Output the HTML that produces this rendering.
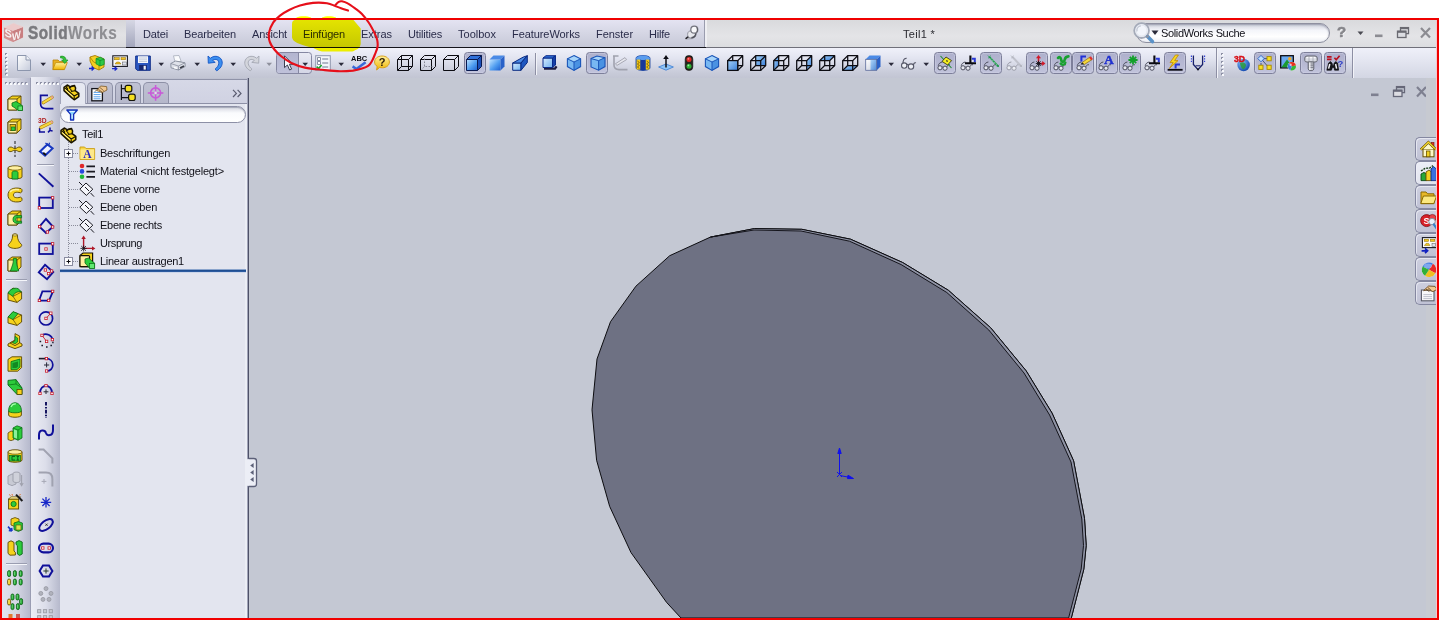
<!DOCTYPE html>
<html lang="de"><head><meta charset="utf-8"><title>SolidWorks - Teil1</title>
<style>
html,body{margin:0;padding:0;background:#fff;}
body{width:1439px;height:620px;position:relative;overflow:hidden;font-family:"Liberation Sans",sans-serif;}
#app div,#app span.t,#app svg{position:absolute;}
#app{position:absolute;left:0;top:0;width:1439px;height:620px;overflow:hidden;}
.t{white-space:nowrap;line-height:1;}
</style></head>
<body><div id="app">
<div style="left:2px;top:20px;width:1435px;height:27px;background:linear-gradient(#d9dadd,#e4e4e7 60%,#dcdde0);"></div>
<div style="left:2px;top:20px;width:124px;height:27px;background:linear-gradient(#d6d6da,#e2e2e5 55%,#dadadd);"></div>
<div style="left:126px;top:20px;width:9px;height:27px;background:linear-gradient(#d6d7e4,#a3a6bc);"></div>
<div style="left:135px;top:20px;width:570px;height:27px;background:linear-gradient(#e4e3f2,#d6d7e5 45%,#c6c8d7);"></div>
<div style="left:704px;top:20px;width:1px;height:27px;background:#9a9cae;"></div>
<div style="left:705px;top:20px;width:2px;height:27px;background:#eeeef2;"></div>
<div style="left:2px;top:47px;width:124px;height:1px;background:#8a8a90;"></div>
<div style="left:126px;top:47px;width:580px;height:1px;background:#15151c;"></div>
<div style="left:706px;top:47px;width:731px;height:1px;background:#70707a;"></div>
<div style="left:2px;top:48px;width:1435px;height:30px;background:linear-gradient(#f0f1fa,#e2e4f0 35%,#c9ccda 80%,#c2c5d3);"></div>
<div style="left:249px;top:78px;width:1188px;height:540px;background:#c4c8d3;"></div>
<div style="left:2px;top:78px;width:29px;height:540px;background:linear-gradient(90deg,#e2e4ee,#d5d7e4 50%,#b4b7cb);"></div>
<div style="left:30px;top:78px;width:1px;height:540px;background:#9a9db3;"></div>
<div style="left:31px;top:77px;width:29px;height:541px;background:linear-gradient(90deg,#ecedf5,#dcdeea 50%,#b6b9cc);"></div>
<div style="left:60px;top:78px;width:187px;height:540px;background:#e3e5ef;"></div>
<div style="left:245px;top:78px;width:2px;height:540px;background:#eceef5;"></div>
<div style="left:247px;top:78px;width:1px;height:540px;background:#a0a3b8;"></div>
<div style="left:248px;top:78px;width:1px;height:540px;background:#4e5168;"></div>
<svg style="left:0px;top:0px;" width="1439" height="620" viewBox="0 0 1439 620">
<polygon points="592.0,409.8 597.0,359.0 610.5,321.7 635.9,286.2 669.7,255.7 710.4,237.1 754.4,228.6 801.8,229.3 850.5,239.2 902.6,262.5 948.4,290.3 990.7,327.8 1026.2,370.9 1052.0,413.0 1073.6,460.8 1084.5,518.4 1086.2,545.5 1083.8,569.2 1071.3,618.0 681.0,618.0 666.5,602.3 631.0,552.6 609.7,506.5 596.6,460.3" fill="#6e7183" stroke="#0c0c10" stroke-width="1"/>
<polygon points="710.4,237.1 754.4,228.6 801.8,229.3 850.5,239.2 902.6,262.5 948.4,290.3 990.7,327.8 1026.2,370.9 1052.0,413.0 1073.6,460.8 1084.5,518.4 1086.2,545.5 1083.8,569.2 1071.3,618.0 1068.6,618.0 1081.2,569.0 1083.5,545.5 1081.8,519.0 1071.0,462.0 1049.6,415.0 1024.0,373.0 988.8,330.0 946.8,292.5 901.2,264.6 849.5,241.2 801.0,231.0 754.0,230.0 710.4,237.1" fill="#9094a6" stroke="none"/>
<polyline points="710.4,237.1 754.4,228.6 801.8,229.3 850.5,239.2 902.6,262.5 948.4,290.3 990.7,327.8 1026.2,370.9 1052.0,413.0 1073.6,460.8 1084.5,518.4 1086.2,545.5 1083.8,569.2 1071.3,618.0" fill="none" stroke="#0c0c10" stroke-width="1"/>
<polyline points="710.4,237.1 754.0,230.0 801.0,231.0 849.5,241.2 901.2,264.6 946.8,292.5 988.8,330.0 1024.0,373.0 1049.6,415.0 1071.0,462.0 1081.8,519.0 1083.5,545.5 1081.2,569.0 1068.6,618.0" fill="none" stroke="#15151c" stroke-width="1"/>
<g stroke="#1010ee" stroke-width="1" fill="#1010ee">
<line x1="839.5" y1="452" x2="839.5" y2="475"/>
<polygon points="839.5,448 837.8,453.5 841.2,453.5"/>
<line x1="837" y1="472" x2="842" y2="477"/><line x1="837" y1="477" x2="842" y2="472"/>
<line x1="840" y1="475.5" x2="850" y2="477.5"/>
<polygon points="853.5,478.5 848,475.2 847.5,478.6"/>
</g>
</svg>
<svg style="left:3px;top:22px;" width="22" height="22" viewBox="0 0 22 22">
<polygon points="0.5,5 10.5,0.8 20.5,4.5 20.5,15.5 10,20.5 0.5,16" fill="#ecd0d0" opacity=".6"/>
<polygon points="1,5.5 10,8.8 10,20 1,16" fill="#d38f90"/>
<polygon points="10,8.8 20,5 20,15.5 10,20" fill="#c97f81"/>
<polygon points="1,5.5 10.5,1.5 20,5 10,8.8" fill="#eccaca"/>
<text x="1.6" y="13.6" font-family="Liberation Sans,sans-serif" font-weight="bold" font-size="11" fill="#f8f0f0" transform="skewY(18)">S</text>
<text x="9.8" y="22.3" font-family="Liberation Sans,sans-serif" font-weight="bold" font-size="10.5" fill="#f8f0f0" transform="skewY(-20) scale(.92,1)" textLength="9.6" lengthAdjust="spacingAndGlyphs">W</text>
</svg>
<span class="t" style="left:28px;top:25px;font-size:17.5px;font-weight:bold;letter-spacing:0.6px;transform-origin:0 0;transform:scaleX(.875);-webkit-text-stroke:0.5px;"><span style="color:#7a7a7e;-webkit-text-stroke-color:#7a7a7e">Solid</span><span style="color:#8e8e92;-webkit-text-stroke:0.15px #8e8e92">Works</span></span>
<span class="t" style="left:143px;top:29px;font-size:11px;color:#2a2c4a;letter-spacing:-0.14px;">Datei</span>
<span class="t" style="left:184px;top:29px;font-size:11px;color:#2a2c4a;letter-spacing:-0.12px;">Bearbeiten</span>
<span class="t" style="left:252px;top:29px;font-size:11px;color:#2a2c4a;letter-spacing:-0.15px;">Ansicht</span>
<span class="t" style="left:303px;top:29px;font-size:11px;color:#2a2c4a;letter-spacing:-0.18px;">Einfügen</span>
<span class="t" style="left:361px;top:29px;font-size:11px;color:#2a2c4a;letter-spacing:-0.03px;">Extras</span>
<span class="t" style="left:408px;top:29px;font-size:11px;color:#2a2c4a;letter-spacing:-0.16px;">Utilities</span>
<span class="t" style="left:458px;top:29px;font-size:11px;color:#2a2c4a;letter-spacing:0.01px;">Toolbox</span>
<span class="t" style="left:512px;top:29px;font-size:11px;color:#2a2c4a;letter-spacing:-0.07px;">FeatureWorks</span>
<span class="t" style="left:596px;top:29px;font-size:11px;color:#2a2c4a;letter-spacing:-0.04px;">Fenster</span>
<span class="t" style="left:649px;top:29px;font-size:11px;color:#2a2c4a;letter-spacing:-0.20px;">Hilfe</span>
<svg style="left:684px;top:24px;" width="16" height="17" viewBox="0 0 16 17"><path d="M5.4,12 L2.2,14.4" stroke="#26262c" stroke-width="1.8" stroke-linecap="round"/><path d="M3,15 L8.6,14.6" stroke="#a4a5b0" stroke-width="1"/>
<ellipse cx="7.8" cy="10.4" rx="4.2" ry="3.7" fill="#e6e7ec" stroke="#8c8d98" stroke-width=".9"/>
<path d="M11.6,8.6 C12.4,11 10.4,13.6 7.4,13.8" fill="none" stroke="#50515c" stroke-width="1.5"/>
<circle cx="10.3" cy="5.7" r="3.5" fill="#f7f7fa" stroke="#73747e" stroke-width="1.2"/><path d="M12.6,3.6 C13.8,5 13.6,7.2 12.2,8.4" fill="none" stroke="#55565f" stroke-width="1"/></svg>
<span class="t" style="left:903px;top:29px;font-size:11px;color:#2a2a30;letter-spacing:0.29px;">Teil1 *</span>
<div style="left:1136px;top:23px;width:194px;height:20px;border-radius:10px;background:linear-gradient(#cfd1dc,#f4f5fa 35%,#ffffff 70%,#eceef4);border:1px solid #8e90a0;box-sizing:border-box;box-shadow:inset 0 1px 2px rgba(80,84,110,.45);"></div>
<span class="t" style="left:1161px;top:28px;font-size:11px;color:#101018;letter-spacing:-0.35px;">SolidWorks Suche</span>
<svg style="left:1132px;top:21px;" width="24" height="24" viewBox="0 0 24 24"><circle cx="9.6" cy="9.6" r="7.4" fill="#f2f5fb" stroke="#a4aab8" stroke-width="1.8"/>
<circle cx="9.6" cy="9.6" r="5.6" fill="none" stroke="#dfe3ec" stroke-width="1"/><path d="M5,10.4 A4.8,4.8 0 0 1 8.8,4.8" fill="none" stroke="#c2c7d4" stroke-width="1.3"/>
<path d="M15.6,15.6 L20.4,20.6" stroke="#5a92c8" stroke-width="3.6" stroke-linecap="round"/>
<path d="M14.6,14.6 L16.4,16.4" stroke="#8e94a2" stroke-width="2.4"/></svg>
<svg style="left:1151px;top:30px;" width="8" height="6" viewBox="0 0 8 6"><polygon points="0.5,0.5 7.5,0.5 4,5" fill="#2a2a3a"/></svg>
<span class="t" style="left:1337px;top:24px;font-size:15px;font-weight:bold;color:#85858a;-webkit-text-stroke:0.6px #85858a;text-shadow:1px 1px 0 #f4f4f6;">?</span>
<svg style="left:1357px;top:31px;" width="7" height="5" viewBox="0 0 7 5"><polygon points="0.5,0.5 6.5,0.5 3.5,4" fill="#4a4a52"/></svg>
<svg style="left:1374px;top:26px;" width="60" height="14" viewBox="0 0 60 14">
<rect x="1" y="8.5" width="7.5" height="2.6" fill="#8c8c92"/>
<g fill="none" stroke="#6a6a72" stroke-width="1.3"><rect x="26.5" y="1.6" width="8" height="6"/><rect x="23.5" y="5.2" width="8.5" height="6.3" fill="#dcdde2"/></g>
<rect x="26.5" y="1.2" width="8" height="2" fill="#6a6a72"/><rect x="23.5" y="4.8" width="8.5" height="2" fill="#6a6a72"/>
<path d="M47,2 L56,11.5 M56,2 L47,11.5" stroke="#8c8c92" stroke-width="2.2"/></svg>
<svg style="left:5px;top:53px;" width="3" height="23" viewBox="0 0 3 23"><rect x="0" y="0" width="2" height="2" fill="#8d90a4"/><rect x="1" y="1" width="2" height="2" fill="#f6f7fb"/><rect x="0" y="4" width="2" height="2" fill="#8d90a4"/><rect x="1" y="5" width="2" height="2" fill="#f6f7fb"/><rect x="0" y="8" width="2" height="2" fill="#8d90a4"/><rect x="1" y="9" width="2" height="2" fill="#f6f7fb"/><rect x="0" y="12" width="2" height="2" fill="#8d90a4"/><rect x="1" y="13" width="2" height="2" fill="#f6f7fb"/><rect x="0" y="16" width="2" height="2" fill="#8d90a4"/><rect x="1" y="17" width="2" height="2" fill="#f6f7fb"/><rect x="0" y="20" width="2" height="2" fill="#8d90a4"/><rect x="1" y="21" width="2" height="2" fill="#f6f7fb"/></svg>
<svg style="left:1221px;top:53px;" width="3" height="23" viewBox="0 0 3 23"><rect x="0" y="0" width="2" height="2" fill="#8d90a4"/><rect x="1" y="1" width="2" height="2" fill="#f6f7fb"/><rect x="0" y="4" width="2" height="2" fill="#8d90a4"/><rect x="1" y="5" width="2" height="2" fill="#f6f7fb"/><rect x="0" y="8" width="2" height="2" fill="#8d90a4"/><rect x="1" y="9" width="2" height="2" fill="#f6f7fb"/><rect x="0" y="12" width="2" height="2" fill="#8d90a4"/><rect x="1" y="13" width="2" height="2" fill="#f6f7fb"/><rect x="0" y="16" width="2" height="2" fill="#8d90a4"/><rect x="1" y="17" width="2" height="2" fill="#f6f7fb"/><rect x="0" y="20" width="2" height="2" fill="#8d90a4"/><rect x="1" y="21" width="2" height="2" fill="#f6f7fb"/></svg>
<div style="left:535px;top:53px;width:1px;height:22px;background:#8d8fa4;"></div>
<div style="left:536px;top:53px;width:1px;height:22px;background:#f2f3f8;"></div>
<div style="left:1216px;top:48px;width:1px;height:30px;background:#8d8fa4;"></div>
<div style="left:1217px;top:48px;width:1px;height:30px;background:#f2f3f8;"></div>
<div style="left:1352px;top:48px;width:1px;height:30px;background:#8d8fa4;"></div>
<div style="left:1353px;top:48px;width:1px;height:30px;background:#f2f3f8;"></div>
<div style="left:1354px;top:48px;width:83px;height:30px;background:linear-gradient(#eff0f9,#e4e6f1 40%,#d3d6e3);"></div>
<svg width="0" height="0" style="left:0;top:0"><defs>
<linearGradient id="gb" x1="0" y1="0" x2="1" y2="1"><stop offset="0" stop-color="#bfe3ff"/><stop offset=".55" stop-color="#4f9df0"/><stop offset="1" stop-color="#1d5fd0"/></linearGradient>
<linearGradient id="gb2" x1="0" y1="0" x2="1" y2="1"><stop offset="0" stop-color="#a4d2fa"/><stop offset="1" stop-color="#3a7ed6"/></linearGradient>
<linearGradient id="gbl" x1="0" y1="0" x2="1" y2="1"><stop offset="0" stop-color="#d6ecff"/><stop offset="1" stop-color="#6fb0ee"/></linearGradient>
<linearGradient id="gy" x1="0" y1="0" x2="0" y2="1"><stop offset="0" stop-color="#fff2a0"/><stop offset="1" stop-color="#f0b400"/></linearGradient>
<linearGradient id="gpg" x1="0" y1="0" x2="1" y2="1"><stop offset="0" stop-color="#ffffff"/><stop offset="1" stop-color="#c5cbdb"/></linearGradient>
<radialGradient id="gglobe" cx=".35" cy=".3" r=".8"><stop offset="0" stop-color="#7fc0ff"/><stop offset="1" stop-color="#0b3fa8"/></radialGradient>
</defs></svg>
<svg style="left:16px;top:55px;overflow:visible;" width="16" height="16" viewBox="0 0 16 16"><path d="M1.5,0.5 H10 L14.5,5 V15.5 H1.5 Z" fill="url(#gpg)" stroke="#8c96ad" stroke-width="1"/><path d="M10,0.5 V5 H14.5" fill="#eef1f7" stroke="#8c96ad" stroke-width="1"/></svg>
<svg style="left:40px;top:62px;" width="7" height="5" viewBox="0 0 7 5"><polygon points="0.4,0.8 6,0.8 3.2,4" fill="#2b2b3b"/></svg>
<svg style="left:52px;top:55px;overflow:visible;" width="16" height="16" viewBox="0 0 16 16"><path d="M1,5 H6 L7.5,6.5 H12 V14.5 H1 Z" fill="#e9b020" stroke="#b98408" stroke-width=".8"/>
<path d="M0.8,14.6 L3.6,7.6 H15.3 L12.4,14.6 Z" fill="url(#gy)" stroke="#c08a08" stroke-width=".8"/>
<path d="M8.5,1.2 C12,0.6 14,2.4 14,5 L16,5 L12.8,8.6 L9.6,5 L11.6,5 C11.6,3.6 10.6,2.8 8.5,3 Z" fill="#35c33a" stroke="#138a1c" stroke-width=".6"/></svg>
<svg style="left:76px;top:62px;" width="7" height="5" viewBox="0 0 7 5"><polygon points="0.4,0.8 6,0.8 3.2,4" fill="#2b2b3b"/></svg>
<svg style="left:89px;top:55px;overflow:visible;" width="16" height="16" viewBox="0 0 16 16"><path d="M1,2 L6,0.5 L15,4 L15,12 L10,15 L4,12.5 L1,6 Z" fill="#f5cf22" stroke="#a87c00" stroke-width=".9"/>
<path d="M1,2 L4.5,7 L10,9 L10,15" fill="none" stroke="#a87c00" stroke-width=".8"/>
<path d="M7,3.5 L11.5,2.2 L15.2,4.2 L15.2,9.5 L11,11 L7,8.8 Z" fill="#2fc848" stroke="#0d8a22" stroke-width=".7"/><path d="M7,3.5 L11,5.6 L15.2,4.2 M11,5.6 L11,11" fill="none" stroke="#0d8a22" stroke-width=".7"/>
<path d="M0,13.5 H4.2 M2.6,11.5 L4.8,13.5 L2.6,15.5" fill="none" stroke="#1828c8" stroke-width="1.3"/></svg>
<svg style="left:112px;top:55px;overflow:visible;" width="16" height="16" viewBox="0 0 16 16"><rect x="0.8" y="0.8" width="14.6" height="10.6" fill="#fbfbfd" stroke="#1a1a22" stroke-width="1.1"/>
<rect x="2.6" y="2.6" width="4.6" height="2.2" fill="#f0c020" stroke="#8a6a00" stroke-width=".5"/><rect x="9" y="2.6" width="4.6" height="2.2" fill="#f0c020" stroke="#8a6a00" stroke-width=".5"/>
<path d="M3,9 L4.6,7 H7.4 L9,9 Z" fill="#f0c020" stroke="#8a6a00" stroke-width=".5"/><rect x="10.5" y="7" width="4" height="3" fill="#dfe3ee" stroke="#555" stroke-width=".5"/>
<path d="M0,13.7 H4.2 M2.6,11.8 L4.8,13.7 L2.6,15.6" fill="none" stroke="#1828c8" stroke-width="1.3"/></svg>
<svg style="left:135px;top:55px;overflow:visible;" width="16" height="16" viewBox="0 0 16 16"><path d="M0.7,1 H15.3 V15.3 H2.2 L0.7,13.8 Z" fill="#2a56c0" stroke="#12308a" stroke-width="1"/>
<rect x="3" y="1.2" width="10" height="6.8" fill="#f4f6fb"/><path d="M4,3 H12 M4,4.8 H12 M4,6.5 H12" stroke="#b8c0d4" stroke-width=".8"/>
<rect x="4.2" y="10" width="7.6" height="5.2" fill="#16266e"/><rect x="8.6" y="10.8" width="2.2" height="3.8" fill="#eef1f8"/></svg>
<svg style="left:158px;top:62px;" width="7" height="5" viewBox="0 0 7 5"><polygon points="0.4,0.8 6,0.8 3.2,4" fill="#2b2b3b"/></svg>
<svg style="left:170px;top:55px;overflow:visible;" width="16" height="16" viewBox="0 0 16 16"><path d="M3.5,0.8 L9,0.5 L11.2,6.5 L5,7 Z" fill="#fafbfd" stroke="#a7adbb" stroke-width=".8"/>
<path d="M0.8,8.5 L5.5,6 L15,7.8 L15.2,11.5 L8.5,15 L1,12.8 Z" fill="#dfe2ea" stroke="#868c9b" stroke-width=".9"/>
<path d="M0.8,8.5 L8.3,11 L15,7.8 M8.3,11 L8.5,15" fill="none" stroke="#868c9b" stroke-width=".8"/>
<path d="M4,12.5 L7,13.4" stroke="#fff" stroke-width="1.4"/><path d="M10,13 L14,11" stroke="#3a3d48" stroke-width="1.6"/></svg>
<svg style="left:194px;top:62px;" width="7" height="5" viewBox="0 0 7 5"><polygon points="0.4,0.8 6,0.8 3.2,4" fill="#2b2b3b"/></svg>
<svg style="left:207px;top:55px;overflow:visible;" width="16" height="16" viewBox="0 0 16 16"><path d="M1,1 L1.3,8.2 L8.2,7.4 L5.6,5.4 C8.4,3.4 12.2,4.6 11.8,8.2 C11.6,10.8 9.8,12.8 8,14.2 L9.8,15.8 C13.2,13.6 15.6,10.6 15.2,7 C14.6,1.6 8,-0.6 3.4,3.2 Z" fill="#3b8ef0" stroke="#1556c4" stroke-width=".9" stroke-linejoin="round"/></svg>
<svg style="left:230px;top:62px;" width="7" height="5" viewBox="0 0 7 5"><polygon points="0.4,0.8 6,0.8 3.2,4" fill="#2b2b3b"/></svg>
<svg style="left:244px;top:55px;overflow:visible;" width="16" height="16" viewBox="0 0 16 16"><path d="M15,1 L14.7,8.2 L7.8,7.4 L10.4,5.4 C7.6,3.4 3.8,4.6 4.2,8.2 C4.4,10.8 6.2,12.8 8,14.2 L6.2,15.8 C2.8,13.6 0.4,10.6 0.8,7 C1.4,1.6 8,-0.6 12.6,3.2 Z" fill="#d3d5dc" stroke="#a4a7b2" stroke-width=".9" stroke-linejoin="round"/></svg>
<svg style="left:266px;top:62px;" width="7" height="5" viewBox="0 0 7 5"><polygon points="0.4,0.8 6,0.8 3.2,4" fill="#8e909c"/></svg>
<div style="left:276px;top:52px;width:36px;height:22px;box-sizing:border-box;border:1px solid #8587a2;border-radius:3.5px;background:linear-gradient(#e9eaf4,#d4d6e6);"></div>
<div style="left:277px;top:53px;width:21px;height:20px;background:linear-gradient(#b3b5d0,#bfc1da);border-radius:2.5px 0 0 2.5px;"></div>
<div style="left:298px;top:53px;width:1px;height:20px;background:#8587a2;"></div>
<svg style="left:280px;top:55px;overflow:visible;" width="16" height="16" viewBox="0 0 16 16"><path d="M4.5,0.8 L4.5,12.6 L7.4,10 L9.6,15 L11.6,14.1 L9.4,9.3 L13,9.3 Z" fill="#f7f8fc" stroke="#3c3e50" stroke-width="1" stroke-linejoin="round"/></svg>
<svg style="left:302px;top:62px;" width="7" height="5" viewBox="0 0 7 5"><polygon points="0.4,0.8 6,0.8 3.2,4" fill="#2b2b3b"/></svg>
<svg style="left:315px;top:55px;overflow:visible;" width="16" height="16" viewBox="0 0 16 16"><rect x="0.7" y="0.7" width="14.6" height="14.6" fill="#f3f5fa" stroke="#8f97ad" stroke-width="1"/>
<rect x="2.6" y="2.6" width="2.8" height="2.8" fill="#fff" stroke="#6f7890" stroke-width=".8"/><rect x="2.6" y="6.6" width="2.8" height="2.8" fill="#fff" stroke="#6f7890" stroke-width=".8"/>
<path d="M7.2,4 H13.2 M7.2,8 H13.2 M7.2,12 H13.2" stroke="#6f7890" stroke-width="1"/>
<path d="M1.6,11.6 L3.6,13.6 L6.6,10" fill="none" stroke="#18a028" stroke-width="1.6"/></svg>
<svg style="left:338px;top:62px;" width="7" height="5" viewBox="0 0 7 5"><polygon points="0.4,0.8 6,0.8 3.2,4" fill="#2b2b3b"/></svg>
<svg style="left:351px;top:55px;overflow:visible;" width="16" height="16" viewBox="0 0 16 16"><text x="0" y="5.9" font-family="Liberation Sans,sans-serif" font-weight="bold" font-size="8" fill="#0e0e14" textLength="16.2" lengthAdjust="spacingAndGlyphs">ABC</text>
<path d="M1.6,11.4 L5.4,14 L14.6,7.2" fill="none" stroke="#3a68d8" stroke-width="2.5" stroke-linejoin="miter"/></svg>
<svg style="left:374px;top:55px;overflow:visible;" width="16" height="16" viewBox="0 0 16 16"><path d="M8,1 C12.4,1 15.4,3.6 15.4,7 C15.4,10.4 12.2,12.8 8.4,12.8 C7.2,12.8 6.4,12.7 5.6,12.4 L2.6,15 L3.2,11.4 C1.4,10.4 0.6,8.8 0.6,7 C0.6,3.6 3.6,1 8,1 Z" fill="url(#gy)" stroke="#d59a10" stroke-width=".9"/>
<text x="8" y="11" text-anchor="middle" font-family="Liberation Sans,sans-serif" font-weight="bold" font-size="11" fill="#2a1c08">?</text></svg>
<svg style="left:397px;top:55px;overflow:visible;" width="16" height="16" viewBox="0 0 16 16"><g fill="none" stroke="#0c0c12" stroke-width="1" stroke-linejoin="round"><rect x="0.5" y="4.5" width="11" height="11"/><path d="M0.5,4.5 L4.5,0.5 H15.5 V11.5 L11.5,15.5 M11.5,4.5 L15.5,0.5"/><path d="M4.5,0.5 V11.5 H15.5 M4.5,11.5 L0.5,15.5"/></g></svg>
<svg style="left:420px;top:55px;overflow:visible;" width="16" height="16" viewBox="0 0 16 16"><g fill="none" stroke="#0c0c12" stroke-width="1" stroke-linejoin="round"><rect x="0.5" y="4.5" width="11" height="11"/><path d="M0.5,4.5 L4.5,0.5 H15.5 V11.5 L11.5,15.5 M11.5,4.5 L15.5,0.5"/><path d="M4.5,3.5 V11.5 H12.5 M4.5,11.5 L1.7,14.5" stroke="#7a7d8a" stroke-width=".9" stroke-dasharray="1.6,1.4"/></g></svg>
<svg style="left:443px;top:55px;overflow:visible;" width="16" height="16" viewBox="0 0 16 16"><g fill="none" stroke="#0c0c12" stroke-width="1" stroke-linejoin="round"><rect x="0.5" y="4.5" width="11" height="11"/><path d="M0.5,4.5 L4.5,0.5 H15.5 V11.5 L11.5,15.5 M11.5,4.5 L15.5,0.5"/></g></svg>
<div style="left:464px;top:52px;width:22px;height:22px;box-sizing:border-box;border:1px solid #7d7f9a;border-radius:3.5px;background:linear-gradient(#aeb0cc,#b8bad4 60%,#c2c4dc);box-shadow:inset 0 0 0 1px rgba(206,208,228,.5);"></div>
<svg style="left:466px;top:55px;overflow:visible;" width="16" height="16" viewBox="0 0 16 16"><polygon points="0.5,4.5 11.5,4.5 11.5,15.5 0.5,15.5" fill="url(#gb)"/><polygon points="0.5,4.5 4.5,0.5 15.5,0.5 11.5,4.5" fill="#2f6fd8"/><polygon points="11.5,4.5 15.5,0.5 15.5,11.5 11.5,15.5" fill="#1a4fb8"/><g fill="none" stroke="#0a1a50" stroke-width="1" stroke-linejoin="round"><rect x="0.5" y="4.5" width="11" height="11"/><path d="M0.5,4.5 L4.5,0.5 H15.5 V11.5 L11.5,15.5 M11.5,4.5 L15.5,0.5"/></g></svg>
<svg style="left:489px;top:55px;overflow:visible;" width="16" height="16" viewBox="0 0 16 16"><polygon points="0.5,4.5 11.5,4.5 11.5,15.5 0.5,15.5" fill="url(#gb)"/><polygon points="0.5,4.5 4.5,0.5 15.5,0.5 11.5,4.5" fill="#4a8ae6"/><polygon points="11.5,4.5 15.5,0.5 15.5,11.5 11.5,15.5" fill="#2a62c8"/></svg>
<svg style="left:512px;top:55px;overflow:visible;" width="16" height="16" viewBox="0 0 16 16"><polygon points="0.7,8 9,8 9,15.3 0.7,15.3" fill="url(#gbl)" stroke="#0a2a80" stroke-width="1"/>
<polygon points="0.7,8 9,8 15.3,0.7 11,2.2" fill="#4a8ae6" stroke="#0a2a80" stroke-width="1"/>
<polygon points="9,8 15.3,0.7 15.3,7.5 9,15.3" fill="#1f57c0" stroke="#0a2a80" stroke-width="1"/></svg>
<svg style="left:542px;top:55px;overflow:visible;" width="16" height="16" viewBox="0 0 16 16"><path d="M2,13.6 L13,13.6 L14.6,11.4" stroke="#1a1a40" stroke-width="2.2" fill="none"/>
<polygon points="1,3 10.5,3 10.5,12.5 1,12.5" fill="url(#gbl)" stroke="#0a2a8a" stroke-width="1"/>
<polygon points="1,3 4,0.7 13.5,0.7 10.5,3" fill="#2f6fd8" stroke="#0a2a8a" stroke-width="1"/>
<polygon points="10.5,3 13.5,0.7 13.5,10 10.5,12.5" fill="#143fa8" stroke="#0a2a8a" stroke-width="1"/></svg>
<svg style="left:566px;top:55px;overflow:visible;" width="16" height="16" viewBox="0 0 16 16"><polygon points="8,0.6 14.6,3.8 14.6,11.6 8,15.4 1.4,11.6 1.4,3.8" fill="#78b8f2"/>
<polygon points="8,7 14.6,3.8 14.6,11.6 8,15.4" fill="#4a92e2"/><polygon points="8,0.6 14.6,3.8 8,7 1.4,3.8" fill="#a6d4fa"/>
<path d="M1.4,3.8 L8,7 L14.6,3.8 M8,7 V15.4" fill="none" stroke="#1a55b8" stroke-width="1"/>
<polygon points="8,0.6 14.6,3.8 14.6,11.6 8,15.4 1.4,11.6 1.4,3.8" fill="none" stroke="#1a55b8" stroke-width="1.1"/></svg>
<div style="left:586px;top:52px;width:22px;height:22px;box-sizing:border-box;border:1px solid #7d7f9a;border-radius:3.5px;background:linear-gradient(#aeb0cc,#b8bad4 60%,#c2c4dc);box-shadow:inset 0 0 0 1px rgba(206,208,228,.5);"></div>
<svg style="left:590px;top:55px;overflow:visible;" width="16" height="16" viewBox="0 0 16 16"><polygon points="1,3.6 7,1 15,2.6 15,11.6 8.6,15.2 1,12" fill="#78b8f2"/>
<polygon points="8.6,5.6 15,2.6 15,11.6 8.6,15.2" fill="#4a92e2"/><polygon points="1,3.6 7,1 15,2.6 8.6,5.6" fill="#a6d4fa"/>
<path d="M1,3.6 L8.6,5.6 L15,2.6 M8.6,5.6 V15.2" fill="none" stroke="#1a55b8" stroke-width="1"/>
<polygon points="1,3.6 7,1 15,2.6 15,11.6 8.6,15.2 1,12" fill="none" stroke="#1a55b8" stroke-width="1.1"/></svg>
<svg style="left:612px;top:55px;overflow:visible;" width="16" height="16" viewBox="0 0 16 16"><path d="M1,1 H6.5 M2,1 V10 C2,13 4,14.6 7,14.6 H15.5" fill="none" stroke="#a0a2ae" stroke-width="1.6"/>
<path d="M3.4,8.8 L13,2.6 L14.6,4.6 L5,10.4 Z" fill="#e6e7ee" stroke="#a0a2ae" stroke-width=".9"/></svg>
<svg style="left:635px;top:55px;overflow:visible;" width="16" height="16" viewBox="0 0 16 16"><path d="M1,3.4 C1,1.6 4,0.6 8,0.6 C12,0.6 15,1.6 15,3.4 V12.6 C15,14.4 12,15.4 8,15.4 C4,15.4 1,14.4 1,12.6 Z" fill="#2a62c8" stroke="#123a98" stroke-width=".8"/>
<ellipse cx="8" cy="3.4" rx="7" ry="2.8" fill="#5a9cee"/>
<path d="M5.2,4.5 V15 C6.5,15.4 9.5,15.4 10.8,15 V4.5 C9.5,5.2 6.5,5.2 5.2,4.5 Z" fill="#16389a"/>
<rect x="1.6" y="4.6" width="3.6" height="10" fill="#f2c818"/><rect x="10.8" y="4.6" width="3.6" height="10" fill="#f2c818"/>
<path d="M2.4,6 L4.4,7.5 L2.4,9 L4.4,10.5 L2.4,12 L4.4,13.5 M11.6,6 L13.6,7.5 L11.6,9 L13.6,10.5 L11.6,12 L13.6,13.5" fill="none" stroke="#7a5a00" stroke-width=".8"/></svg>
<svg style="left:658px;top:55px;overflow:visible;" width="16" height="16" viewBox="0 0 16 16"><polygon points="0.6,12 8,9 15.4,12 8,15.2" fill="#8ec4f6" stroke="#3a7ad0" stroke-width=".8"/>
<path d="M8,12.4 V2" stroke="#0c0c14" stroke-width="1.5"/><polygon points="8,0 5.2,4 10.8,4" fill="#0c0c14"/></svg>
<svg style="left:681px;top:55px;overflow:visible;" width="16" height="16" viewBox="0 0 16 16"><rect x="4.2" y="0.6" width="7.6" height="14.8" rx="3.4" fill="#26241e" stroke="#0a0a08" stroke-width=".6"/>
<circle cx="8" cy="4.6" r="2.5" fill="#e02824"/><circle cx="7.4" cy="3.8" r=".9" fill="#ff8a8a"/>
<circle cx="8" cy="11.2" r="2.5" fill="#2cb034"/><circle cx="7.4" cy="10.4" r=".9" fill="#9af0a0"/></svg>
<svg style="left:704px;top:55px;overflow:visible;" width="16" height="16" viewBox="0 0 16 16"><polygon points="8,0.6 14.6,3.8 14.6,11.6 8,15.4 1.4,11.6 1.4,3.8" fill="#78b8f2"/>
<polygon points="8,7 14.6,3.8 14.6,11.6 8,15.4" fill="#4a92e2"/><polygon points="8,0.6 14.6,3.8 8,7 1.4,3.8" fill="#a6d4fa"/>
<path d="M1.4,3.8 L8,7 L14.6,3.8 M8,7 V15.4" fill="none" stroke="#1a55b8" stroke-width="1"/>
<polygon points="8,0.6 14.6,3.8 14.6,11.6 8,15.4 1.4,11.6 1.4,3.8" fill="none" stroke="#1a55b8" stroke-width="1.1"/></svg>
<svg style="left:727px;top:55px;overflow:visible;" width="16" height="16" viewBox="0 0 16 16"><g fill="none" stroke="#0c0c12" stroke-width="1.25" stroke-linejoin="round"><rect x="0.7" y="5.6" width="10" height="9.8"/><path d="M0.7,5.6 L5.7,0.7 H15.7 V10.5 L10.7,15.4 M10.7,5.6 L15.7,0.7"/><path d="M5.7,0.7 V10.5 H15.7 M5.7,10.5 L0.7,15.4"/></g><polygon points="0.7,5.6 10.7,5.6 10.7,15.4 0.7,15.4" fill="url(#gb2)"/><rect x="0.7" y="5.6" width="10" height="9.8" fill="none" stroke="#0c0c12" stroke-width="1.25"/></svg>
<svg style="left:750px;top:55px;overflow:visible;" width="16" height="16" viewBox="0 0 16 16"><polygon points="5.7,0.7 15.7,0.7 15.7,10.5 5.7,10.5" fill="url(#gb2)"/><g fill="none" stroke="#0c0c12" stroke-width="1.25" stroke-linejoin="round"><rect x="0.7" y="5.6" width="10" height="9.8"/><path d="M0.7,5.6 L5.7,0.7 H15.7 V10.5 L10.7,15.4 M10.7,5.6 L15.7,0.7"/><path d="M5.7,0.7 V10.5 H15.7 M5.7,10.5 L0.7,15.4"/></g></svg>
<svg style="left:773px;top:55px;overflow:visible;" width="16" height="16" viewBox="0 0 16 16"><polygon points="0.7,5.6 5.7,0.7 5.7,10.5 0.7,15.4" fill="url(#gb2)"/><g fill="none" stroke="#0c0c12" stroke-width="1.25" stroke-linejoin="round"><rect x="0.7" y="5.6" width="10" height="9.8"/><path d="M0.7,5.6 L5.7,0.7 H15.7 V10.5 L10.7,15.4 M10.7,5.6 L15.7,0.7"/><path d="M5.7,0.7 V10.5 H15.7 M5.7,10.5 L0.7,15.4"/></g></svg>
<svg style="left:796px;top:55px;overflow:visible;" width="16" height="16" viewBox="0 0 16 16"><polygon points="10.7,5.6 15.7,0.7 15.7,10.5 10.7,15.4" fill="url(#gb2)"/><g fill="none" stroke="#0c0c12" stroke-width="1.25" stroke-linejoin="round"><rect x="0.7" y="5.6" width="10" height="9.8"/><path d="M0.7,5.6 L5.7,0.7 H15.7 V10.5 L10.7,15.4 M10.7,5.6 L15.7,0.7"/><path d="M5.7,0.7 V10.5 H15.7 M5.7,10.5 L0.7,15.4"/></g></svg>
<svg style="left:819px;top:55px;overflow:visible;" width="16" height="16" viewBox="0 0 16 16"><polygon points="0.7,5.6 5.7,0.7 15.7,0.7 10.7,5.6" fill="url(#gb2)"/><g fill="none" stroke="#0c0c12" stroke-width="1.25" stroke-linejoin="round"><rect x="0.7" y="5.6" width="10" height="9.8"/><path d="M0.7,5.6 L5.7,0.7 H15.7 V10.5 L10.7,15.4 M10.7,5.6 L15.7,0.7"/><path d="M5.7,0.7 V10.5 H15.7 M5.7,10.5 L0.7,15.4"/></g></svg>
<svg style="left:842px;top:55px;overflow:visible;" width="16" height="16" viewBox="0 0 16 16"><polygon points="0.7,15.4 5.7,10.5 15.7,10.5 10.7,15.4" fill="url(#gb2)"/><g fill="none" stroke="#0c0c12" stroke-width="1.25" stroke-linejoin="round"><rect x="0.7" y="5.6" width="10" height="9.8"/><path d="M0.7,5.6 L5.7,0.7 H15.7 V10.5 L10.7,15.4 M10.7,5.6 L15.7,0.7"/><path d="M5.7,0.7 V10.5 H15.7 M5.7,10.5 L0.7,15.4"/></g></svg>
<svg style="left:865px;top:55px;overflow:visible;" width="16" height="16" viewBox="0 0 16 16"><polygon points="0.5,4.5 11.5,4.5 11.5,15.5 0.5,15.5" fill="url(#gpg)"/><polygon points="0.5,4.5 4.5,0.5 15.5,0.5 11.5,4.5" fill="#4a8ae6"/><polygon points="11.5,4.5 15.5,0.5 15.5,11.5 11.5,15.5" fill="#2a62c8"/><polygon points="5.5,4.3 11.7,4.3 11.7,15.3 5.5,15.3" fill="url(#gb2)" opacity=".85"/><rect x="0.7" y="4.3" width="11" height="11" fill="none" stroke="#5a6a9a" stroke-width=".8"/></svg>
<svg style="left:888px;top:62px;" width="7" height="5" viewBox="0 0 7 5"><polygon points="0.4,0.8 6,0.8 3.2,4" fill="#2b2b3b"/></svg>
<svg style="left:900px;top:55px;overflow:visible;" width="16" height="16" viewBox="0 0 16 16"><g fill="none" stroke="#565868" stroke-width="1.1"><path d="M3.4,9 C2.4,5.6 4.2,3 6.6,3.4"/>
<circle cx="4.2" cy="10.6" r="2.7" fill="#eef0f6"/><circle cx="11" cy="11.6" r="2.7" fill="#eef0f6"/>
<path d="M6.8,9.8 C7.6,9 8.2,9.4 8.6,10.2"/><path d="M13.4,10.2 C13.8,8 14.8,7.4 16,7.8"/></g></svg>
<svg style="left:923px;top:62px;" width="7" height="5" viewBox="0 0 7 5"><polygon points="0.4,0.8 6,0.8 3.2,4" fill="#2b2b3b"/></svg>
<div style="left:934px;top:52px;width:22px;height:22px;box-sizing:border-box;border:1px solid #7d7f9a;border-radius:3.5px;background:linear-gradient(#aeb0cc,#b8bad4 60%,#c2c4dc);box-shadow:inset 0 0 0 1px rgba(206,208,228,.5);"></div>
<svg style="left:937px;top:55px;overflow:visible;" width="16" height="16" viewBox="0 0 16 16"><g transform="translate(0,0)" fill="#e6e8f0" stroke="#4e5060" stroke-width="1">
<path d="M1.2,10.8 C1.6,8.6 3.4,7.2 5.4,7" fill="none"/>
<circle cx="3" cy="12.8" r="2.1"/><circle cx="8" cy="13.2" r="2.1"/>
<path d="M4.9,12.2 C5.4,11.7 5.8,11.8 6.1,12.3" fill="none"/>
<path d="M9.8,11.8 C10.6,10 11.8,9.4 13,9.8" fill="none"/></g><path d="M3.5,1 L14.5,13" stroke="#1a8a30" stroke-width="1.1"/>
<polygon points="9,2 14.6,5.6 10.6,10 5,6.4" fill="#f4ee20" stroke="#2a2a10" stroke-width=".8"/><path d="M9.8,5 L10.2,7" stroke="#222" stroke-width="1"/></svg>
<svg style="left:960px;top:55px;overflow:visible;" width="16" height="16" viewBox="0 0 16 16"><g transform="translate(0,0)" fill="#e6e8f0" stroke="#4e5060" stroke-width="1">
<path d="M1.2,10.8 C1.6,8.6 3.4,7.2 5.4,7" fill="none"/>
<circle cx="3" cy="12.8" r="2.1"/><circle cx="8" cy="13.2" r="2.1"/>
<path d="M4.9,12.2 C5.4,11.7 5.8,11.8 6.1,12.3" fill="none"/>
<path d="M9.8,11.8 C10.6,10 11.8,9.4 13,9.8" fill="none"/></g><path d="M10.4,0.4 V8.6 M5,8.2 H16" stroke="#0a0a10" stroke-width="2.1" fill="none"/><path d="M11.8,3.8 H14.8 V7" stroke="#2a3ad8" stroke-width="2" fill="none"/></svg>
<div style="left:980px;top:52px;width:22px;height:22px;box-sizing:border-box;border:1px solid #7d7f9a;border-radius:3.5px;background:linear-gradient(#aeb0cc,#b8bad4 60%,#c2c4dc);box-shadow:inset 0 0 0 1px rgba(206,208,228,.5);"></div>
<svg style="left:983px;top:55px;overflow:visible;" width="16" height="16" viewBox="0 0 16 16"><g transform="translate(0,0)" fill="#e6e8f0" stroke="#4e5060" stroke-width="1">
<path d="M1.2,10.8 C1.6,8.6 3.4,7.2 5.4,7" fill="none"/>
<circle cx="3" cy="12.8" r="2.1"/><circle cx="8" cy="13.2" r="2.1"/>
<path d="M4.9,12.2 C5.4,11.7 5.8,11.8 6.1,12.3" fill="none"/>
<path d="M9.8,11.8 C10.6,10 11.8,9.4 13,9.8" fill="none"/></g><path d="M6.5,2 L15,11" stroke="#1a9a48" stroke-width="1.7"/><path d="M5,0.6 L7.8,3.4 M7.6,0.8 L5.2,3.2 M13.6,9.6 L16,12 M16,9.8 L13.8,12" stroke="#1a9a48" stroke-width=".9"/>
<path d="M8,3.4 L14,10" stroke="#d8f0e0" stroke-width=".7" stroke-dasharray="1.2,1.2"/></svg>
<svg style="left:1006px;top:55px;overflow:visible;" width="16" height="16" viewBox="0 0 16 16"><g transform="translate(0,0)" fill="#eceef4" stroke="#9a9ca8" stroke-width="1">
<path d="M1.2,10.8 C1.6,8.6 3.4,7.2 5.4,7" fill="none"/>
<circle cx="3" cy="12.8" r="2.1"/><circle cx="8" cy="13.2" r="2.1"/>
<path d="M4.9,12.2 C5.4,11.7 5.8,11.8 6.1,12.3" fill="none"/>
<path d="M9.8,11.8 C10.6,10 11.8,9.4 13,9.8" fill="none"/></g><path d="M6.5,2 L15,11" stroke="#c0c2cc" stroke-width="2"/><path d="M5,0.6 L7.8,3.4 M7.6,0.8 L5.2,3.2 M13.6,9.6 L16,12 M16,9.8 L13.8,12" stroke="#b0b2bc" stroke-width=".9"/></svg>
<div style="left:1026px;top:52px;width:22px;height:22px;box-sizing:border-box;border:1px solid #7d7f9a;border-radius:3.5px;background:linear-gradient(#aeb0cc,#b8bad4 60%,#c2c4dc);box-shadow:inset 0 0 0 1px rgba(206,208,228,.5);"></div>
<svg style="left:1029px;top:55px;overflow:visible;" width="16" height="16" viewBox="0 0 16 16"><g transform="translate(0,0)" fill="#e6e8f0" stroke="#4e5060" stroke-width="1">
<path d="M1.2,10.8 C1.6,8.6 3.4,7.2 5.4,7" fill="none"/>
<circle cx="3" cy="12.8" r="2.1"/><circle cx="8" cy="13.2" r="2.1"/>
<path d="M4.9,12.2 C5.4,11.7 5.8,11.8 6.1,12.3" fill="none"/>
<path d="M9.8,11.8 C10.6,10 11.8,9.4 13,9.8" fill="none"/></g><path d="M9.5,8.5 V2.4 M9.5,8.5 H14" stroke="#d01828" stroke-width="1.5"/><polygon points="9.5,0 7,3.2 12,3.2" fill="#d01828"/><polygon points="16.4,8.5 13.2,6 13.2,11" fill="#d01828"/>
<path d="M7.4,6.4 L11.6,10.6 M11.6,6.4 L7.4,10.6 M9.5,5.8 V11.2 M6.8,8.5 H12.2" stroke="#14141c" stroke-width=".9"/></svg>
<div style="left:1050px;top:52px;width:22px;height:22px;box-sizing:border-box;border:1px solid #7d7f9a;border-radius:3.5px;background:linear-gradient(#aeb0cc,#b8bad4 60%,#c2c4dc);box-shadow:inset 0 0 0 1px rgba(206,208,228,.5);"></div>
<svg style="left:1053px;top:55px;overflow:visible;" width="16" height="16" viewBox="0 0 16 16"><g transform="translate(0,0)" fill="#e6e8f0" stroke="#4e5060" stroke-width="1">
<path d="M1.2,10.8 C1.6,8.6 3.4,7.2 5.4,7" fill="none"/>
<circle cx="3" cy="12.8" r="2.1"/><circle cx="8" cy="13.2" r="2.1"/>
<path d="M4.9,12.2 C5.4,11.7 5.8,11.8 6.1,12.3" fill="none"/>
<path d="M9.8,11.8 C10.6,10 11.8,9.4 13,9.8" fill="none"/></g><path d="M5,3 C6,1.4 7.6,2 8,4 C8.4,7.6 11,7.8 11.6,5 C12,3 13.2,1.6 15.4,1.4" fill="none" stroke="#18a030" stroke-width="2.6" stroke-linecap="round"/>
<path d="M7.6,8.6 C9,10.4 12,10 12.4,7.6" fill="none" stroke="#18a030" stroke-width="2.4" stroke-linecap="round"/></svg>
<div style="left:1072px;top:52px;width:22px;height:22px;box-sizing:border-box;border:1px solid #7d7f9a;border-radius:3.5px;background:linear-gradient(#aeb0cc,#b8bad4 60%,#c2c4dc);box-shadow:inset 0 0 0 1px rgba(206,208,228,.5);"></div>
<svg style="left:1076px;top:55px;overflow:visible;" width="16" height="16" viewBox="0 0 16 16"><g transform="translate(0,0)" fill="#e6e8f0" stroke="#4e5060" stroke-width="1">
<path d="M1.2,10.8 C1.6,8.6 3.4,7.2 5.4,7" fill="none"/>
<circle cx="3" cy="12.8" r="2.1"/><circle cx="8" cy="13.2" r="2.1"/>
<path d="M4.9,12.2 C5.4,11.7 5.8,11.8 6.1,12.3" fill="none"/>
<path d="M9.8,11.8 C10.6,10 11.8,9.4 13,9.8" fill="none"/></g><path d="M10,1.4 H5.4 V6.4" fill="none" stroke="#2030d8" stroke-width="2"/>
<path d="M6,7.6 L14,2 L16,4.6 L8.4,9.4 Z" fill="#f6d838" stroke="#8a6a10" stroke-width=".7"/><path d="M14,2 L16,4.6" stroke="#e03030" stroke-width="2.2"/><path d="M4.6,9.6 L6,7.6 L8.4,9.4 Z" fill="#1a1a1a"/></svg>
<div style="left:1096px;top:52px;width:22px;height:22px;box-sizing:border-box;border:1px solid #7d7f9a;border-radius:3.5px;background:linear-gradient(#aeb0cc,#b8bad4 60%,#c2c4dc);box-shadow:inset 0 0 0 1px rgba(206,208,228,.5);"></div>
<svg style="left:1098px;top:55px;overflow:visible;" width="16" height="16" viewBox="0 0 16 16"><g transform="translate(0,0)" fill="#e6e8f0" stroke="#4e5060" stroke-width="1">
<path d="M1.2,10.8 C1.6,8.6 3.4,7.2 5.4,7" fill="none"/>
<circle cx="3" cy="12.8" r="2.1"/><circle cx="8" cy="13.2" r="2.1"/>
<path d="M4.9,12.2 C5.4,11.7 5.8,11.8 6.1,12.3" fill="none"/>
<path d="M9.8,11.8 C10.6,10 11.8,9.4 13,9.8" fill="none"/></g><text x="11" y="9" text-anchor="middle" font-family="Liberation Serif,serif" font-weight="bold" font-size="13" fill="#2030d0" stroke="#2030d0" stroke-width=".5">A</text></svg>
<div style="left:1119px;top:52px;width:22px;height:22px;box-sizing:border-box;border:1px solid #7d7f9a;border-radius:3.5px;background:linear-gradient(#aeb0cc,#b8bad4 60%,#c2c4dc);box-shadow:inset 0 0 0 1px rgba(206,208,228,.5);"></div>
<svg style="left:1122px;top:55px;overflow:visible;" width="16" height="16" viewBox="0 0 16 16"><g transform="translate(0,0)" fill="#e6e8f0" stroke="#4e5060" stroke-width="1">
<path d="M1.2,10.8 C1.6,8.6 3.4,7.2 5.4,7" fill="none"/>
<circle cx="3" cy="12.8" r="2.1"/><circle cx="8" cy="13.2" r="2.1"/>
<path d="M4.9,12.2 C5.4,11.7 5.8,11.8 6.1,12.3" fill="none"/>
<path d="M9.8,11.8 C10.6,10 11.8,9.4 13,9.8" fill="none"/></g><path d="M11,0.4 V9.6 M6.4,5 H15.6 M7.8,1.8 L14.2,8.2 M14.2,1.8 L7.8,8.2" stroke="#12a02a" stroke-width="1.8"/></svg>
<svg style="left:1144px;top:55px;overflow:visible;" width="16" height="16" viewBox="0 0 16 16"><g transform="translate(0,0)" fill="#e6e8f0" stroke="#4e5060" stroke-width="1">
<path d="M1.2,10.8 C1.6,8.6 3.4,7.2 5.4,7" fill="none"/>
<circle cx="3" cy="12.8" r="2.1"/><circle cx="8" cy="13.2" r="2.1"/>
<path d="M4.9,12.2 C5.4,11.7 5.8,11.8 6.1,12.3" fill="none"/>
<path d="M9.8,11.8 C10.6,10 11.8,9.4 13,9.8" fill="none"/></g><path d="M10.4,0.4 V8.6 M5,8.2 H16" stroke="#0a0a10" stroke-width="2.1" fill="none"/><path d="M11.8,3.8 H14.8 V7" stroke="#2a3ad8" stroke-width="2" fill="none"/></svg>
<div style="left:1164px;top:52px;width:22px;height:22px;box-sizing:border-box;border:1px solid #7d7f9a;border-radius:3.5px;background:linear-gradient(#aeb0cc,#b8bad4 60%,#c2c4dc);box-shadow:inset 0 0 0 1px rgba(206,208,228,.5);"></div>
<svg style="left:1167px;top:55px;overflow:visible;" width="16" height="16" viewBox="0 0 16 16"><path d="M0.6,14.8 H15.6" stroke="#0a0a10" stroke-width="1.8"/><path d="M8.6,13.6 V9.4 H13" fill="none" stroke="#2a3ad8" stroke-width="2"/>
<polygon points="8.4,0 3,7.6 6.2,7.6 2.4,13.4 11,5.6 7.6,5.6 11.4,0" fill="#f8d820" stroke="#c08a00" stroke-width=".8"/></svg>
<svg style="left:1190px;top:55px;overflow:visible;" width="16" height="16" viewBox="0 0 16 16"><path d="M3.4,0.6 V9.4 L8,14.6 L12.6,9.4 V0.6" fill="none" stroke="#18206a" stroke-width="1.3"/><path d="M5.6,10.8 H10.4" stroke="#18206a" stroke-width="1"/>
<path d="M1.4,0.6 V8.6 M14.6,0.6 V8.6" stroke="#2a3ad8" stroke-width="1.1" stroke-dasharray="1.3,1.3"/><polygon points="8,15.8 6.4,13.4 9.6,13.4" fill="#111"/></svg>
<svg style="left:1234px;top:55px;overflow:visible;" width="16" height="16" viewBox="0 0 16 16"><circle cx="9.6" cy="10" r="6.2" fill="url(#gglobe)"/><path d="M6,8 C8,6.6 10,7.4 11.6,9 C12.6,10.6 11.4,13 9.4,14.6 C7.6,13.6 6,10.6 6,8 Z" fill="#2a9a3a" opacity=".85"/>
<text x="5.6" y="7.4" text-anchor="middle" font-family="Liberation Sans,sans-serif" font-weight="bold" font-size="8.6" fill="#d81018" stroke="#d81018" stroke-width=".4">3D</text></svg>
<div style="left:1254px;top:52px;width:22px;height:22px;box-sizing:border-box;border:1px solid #7d7f9a;border-radius:3.5px;background:linear-gradient(#aeb0cc,#b8bad4 60%,#c2c4dc);box-shadow:inset 0 0 0 1px rgba(206,208,228,.5);"></div>
<svg style="left:1257px;top:55px;overflow:visible;" width="16" height="16" viewBox="0 0 16 16"><path d="M4,3.6 H11.6 M4,3.6 L11.6,12.4 M4,12.4 V8" stroke="#3a4a78" stroke-width=".9" fill="none"/>
<polygon points="4,0.4 7.2,3.6 4,6.8 0.8,3.6" fill="#bfe0ff" stroke="#2a62c8" stroke-width=".9"/>
<rect x="10" y="1.6" width="4.2" height="4.2" fill="#f8e020" stroke="#a88a00" stroke-width=".9"/><rect x="10" y="10.2" width="4.2" height="4.2" fill="#f8e020" stroke="#a88a00" stroke-width=".9"/><rect x="1.8" y="10.2" width="4.2" height="4.2" fill="#f8e020" stroke="#a88a00" stroke-width=".9"/></svg>
<svg style="left:1280px;top:55px;overflow:visible;" width="16" height="16" viewBox="0 0 16 16"><rect x="0.7" y="0.7" width="12.6" height="12.2" fill="#6aa8f0" stroke="#0a0a10" stroke-width="1.3"/><polygon points="1.4,12.2 7,4.6 10,8.6 12.6,6.6 12.6,12.2" fill="#1a9a30"/><circle cx="9.8" cy="3.8" r="1.7" fill="#f6a820"/>
<circle cx="11.8" cy="11.2" r="4.3" fill="#f4f4f4"/><path d="M11.8,11.2 L9,8 A4.3,4.3 0 0 1 16,10.4 Z" fill="#e83020"/><path d="M11.8,11.2 L16,10.4 A4.3,4.3 0 0 1 10.4,15.2 Z" fill="#38b838"/><path d="M11.8,11.2 L10.4,15.2 A4.3,4.3 0 0 1 9,8 Z" fill="#3a7ae0"/><circle cx="10.6" cy="9.8" r="1.2" fill="#fff" opacity=".6"/></svg>
<div style="left:1300px;top:52px;width:22px;height:22px;box-sizing:border-box;border:1px solid #7d7f9a;border-radius:3.5px;background:linear-gradient(#aeb0cc,#b8bad4 60%,#c2c4dc);box-shadow:inset 0 0 0 1px rgba(206,208,228,.5);"></div>
<svg style="left:1303px;top:55px;overflow:visible;" width="16" height="16" viewBox="0 0 16 16"><path d="M1.8,3 Q1.8,1 4,1 H12 Q14.2,1 14.2,3 V5.4 Q14.2,7 12,7 H4 Q1.8,7 1.8,5.4 Z" fill="#d8dae2" stroke="#62646f" stroke-width="1"/>
<path d="M5.2,7 H10.8 V14 L9.6,15.6 H6.4 L5.2,14 Z" fill="#cfd1d9" stroke="#62646f" stroke-width="1"/>
<path d="M5.4,9 H10.6 M5.4,10.8 H10.6 M5.4,12.6 H10.6" stroke="#70727e" stroke-width=".9"/><path d="M6.8,7.6 V14.8" stroke="#f8f8fb" stroke-width="1.3"/><path d="M3.4,2.6 H12.6" stroke="#f8f8fb" stroke-width="1.3"/><path d="M6,1.4 V6.6 M10,1.4 V6.6" stroke="#9a9ca8" stroke-width=".7"/></svg>
<div style="left:1324px;top:52px;width:22px;height:22px;box-sizing:border-box;border:1px solid #7d7f9a;border-radius:3.5px;background:linear-gradient(#aeb0cc,#b8bad4 60%,#c2c4dc);box-shadow:inset 0 0 0 1px rgba(206,208,228,.5);"></div>
<svg style="left:1326px;top:55px;overflow:visible;" width="16" height="16" viewBox="0 0 16 16"><path d="M1,1.8 H5.6 M1,4.4 H5.6" stroke="#b81020" stroke-width="1.7"/><path d="M8.4,2.8 L10.2,4.8 L13.6,0.8" fill="none" stroke="#b81020" stroke-width="1.7"/>
<path d="M0.8,15.2 L2.6,8 L4.4,6.6 L6,8 L6.6,10.4 H7.6 L8.2,8 L9.8,6.6 L11.6,8 L12.6,15.2 H8.6 L8,12.4 H6.4 L5.4,15.2 Z" fill="#16161c" stroke="#000" stroke-width=".6"/>
<path d="M2.6,13.6 L3.8,9 M9.6,9 L10.6,13.6" stroke="#f0f0f4" stroke-width="1.5"/>
<text x="14.4" y="12.4" text-anchor="middle" font-family="Liberation Sans,sans-serif" font-weight="bold" font-size="9.5" fill="#3040c8">?</text></svg>
<svg style="left:5px;top:82px;" width="24" height="3" viewBox="0 0 24 3"><rect x="0" y="0" width="2" height="2" fill="#8d90a4"/><rect x="1" y="1" width="2" height="2" fill="#f8f9fc"/><rect x="4" y="0" width="2" height="2" fill="#8d90a4"/><rect x="5" y="1" width="2" height="2" fill="#f8f9fc"/><rect x="8" y="0" width="2" height="2" fill="#8d90a4"/><rect x="9" y="1" width="2" height="2" fill="#f8f9fc"/><rect x="12" y="0" width="2" height="2" fill="#8d90a4"/><rect x="13" y="1" width="2" height="2" fill="#f8f9fc"/><rect x="16" y="0" width="2" height="2" fill="#8d90a4"/><rect x="17" y="1" width="2" height="2" fill="#f8f9fc"/><rect x="20" y="0" width="2" height="2" fill="#8d90a4"/><rect x="21" y="1" width="2" height="2" fill="#f8f9fc"/></svg>
<svg style="left:36px;top:82px;" width="24" height="3" viewBox="0 0 24 3"><rect x="0" y="0" width="2" height="2" fill="#8d90a4"/><rect x="1" y="1" width="2" height="2" fill="#f8f9fc"/><rect x="4" y="0" width="2" height="2" fill="#8d90a4"/><rect x="5" y="1" width="2" height="2" fill="#f8f9fc"/><rect x="8" y="0" width="2" height="2" fill="#8d90a4"/><rect x="9" y="1" width="2" height="2" fill="#f8f9fc"/><rect x="12" y="0" width="2" height="2" fill="#8d90a4"/><rect x="13" y="1" width="2" height="2" fill="#f8f9fc"/><rect x="16" y="0" width="2" height="2" fill="#8d90a4"/><rect x="17" y="1" width="2" height="2" fill="#f8f9fc"/><rect x="20" y="0" width="2" height="2" fill="#8d90a4"/><rect x="21" y="1" width="2" height="2" fill="#f8f9fc"/></svg>
<div style="left:6px;top:279px;width:21px;height:1px;background:#9a9db0;"></div>
<div style="left:6px;top:280px;width:21px;height:1px;background:#f4f5fa;"></div>
<div style="left:6px;top:563px;width:21px;height:1px;background:#9a9db0;"></div>
<div style="left:6px;top:564px;width:21px;height:1px;background:#f4f5fa;"></div>
<div style="left:37px;top:164px;width:17px;height:1px;background:#9a9db0;"></div>
<div style="left:37px;top:165px;width:17px;height:1px;background:#f4f5fa;"></div>
<svg style="left:7px;top:95px;overflow:visible;" width="16" height="16" viewBox="0 0 16 16"><polygon points="1,4 5,1 14,1 14,11 10,15 1,15" fill="#f6d21c" stroke="#5a4600" stroke-width=".9"/>
<polygon points="1,4 10,4 10,15 1,15" fill="#fff0a0" stroke="#5a4600" stroke-width=".9"/><path d="M10,4 L14,1" stroke="#5a4600" stroke-width=".9"/><polygon points="5,8 9,6.5 14,9.5 15.5,11 15.5,15.5 11,15.5 9.5,14 5,11" fill="#2ccc3c" stroke="#0a6a16" stroke-width=".8"/><rect x="11" y="11" width="4.5" height="4.5" fill="#60e870" stroke="#0a6a16" stroke-width=".7"/></svg>
<svg style="left:7px;top:118px;overflow:visible;" width="16" height="16" viewBox="0 0 16 16"><polygon points="1,4 5,1 14,1 14,11 10,15 1,15" fill="#f6d21c" stroke="#5a4600" stroke-width=".9"/>
<polygon points="1,4 10,4 10,15 1,15" fill="#fff0a0" stroke="#5a4600" stroke-width=".9"/><path d="M10,4 L14,1" stroke="#5a4600" stroke-width=".9"/><rect x="3" y="6.5" width="5.5" height="6" fill="#e8c010" stroke="#5a4600" stroke-width=".8"/><rect x="4.4" y="9" width="3.6" height="3.4" fill="#2ccc3c" stroke="#0a6a16" stroke-width=".6"/></svg>
<svg style="left:7px;top:141px;overflow:visible;" width="16" height="16" viewBox="0 0 16 16"><path d="M8,0 V16" stroke="#1a1a1a" stroke-width="1" stroke-dasharray="3,1.6"/>
<path d="M1,8.4 C1,6 4,5.4 5.6,6.6 C7,7.8 9,7.8 10.4,6.6 C12,5.4 15,6 15,8.4 C15,10.8 12,11.2 10.6,10 C9,9 7,9 5.4,10 C4,11.2 1,10.8 1,8.4 Z" fill="#f6d21c" stroke="#5a4600" stroke-width=".9"/></svg>
<svg style="left:7px;top:164px;overflow:visible;" width="16" height="16" viewBox="0 0 16 16"><path d="M1,4 C1,1.6 15,1.6 15,4 V13 C15,15.4 1,15.4 1,13 Z" fill="#f6d21c" stroke="#5a4600" stroke-width=".9"/><ellipse cx="8" cy="4" rx="7" ry="2.2" fill="#fff0a0" stroke="#5a4600" stroke-width=".7"/>
<path d="M5,15 V8.6 C5,6.4 11,6.4 11,8.6 V15 Z" fill="#2ccc3c" stroke="#0a6a16" stroke-width=".8"/></svg>
<svg style="left:7px;top:187px;overflow:visible;" width="16" height="16" viewBox="0 0 16 16"><path d="M14,1.6 C6,-0.4 1,3 1,8 C1,13 6,16.4 14,14.4 C15.6,13.6 15.4,10.6 13.6,10.2 C9,11.4 6.4,10.4 6.4,8 C6.4,5.6 9,4.6 13.6,5.8 C15.4,5.4 15.6,2.4 14,1.6 Z" fill="#f6d21c" stroke="#5a4600" stroke-width=".9"/>
<path d="M3,5 C4.6,2.8 8,2.2 12,2.8" fill="none" stroke="#fff0a0" stroke-width="1.4"/></svg>
<svg style="left:7px;top:210px;overflow:visible;" width="16" height="16" viewBox="0 0 16 16"><polygon points="1,4 5,1 14,1 14,11 10,15 1,15" fill="#f6d21c" stroke="#5a4600" stroke-width=".9"/>
<polygon points="1,4 10,4 10,15 1,15" fill="#fff0a0" stroke="#5a4600" stroke-width=".9"/><path d="M10,4 L14,1" stroke="#5a4600" stroke-width=".9"/><path d="M14.6,5.6 H9 C5,5.6 5,13.2 9,13.2 H14.6 V11.2 H9.6 C8.4,11.2 8.4,7.8 9.6,7.8 H14.6 Z" fill="#2ccc3c" stroke="#0a6a16" stroke-width=".8"/></svg>
<svg style="left:7px;top:233px;overflow:visible;" width="16" height="16" viewBox="0 0 16 16"><path d="M5.6,2 C5.6,0.6 10.4,0.6 10.4,2 C10.4,7 12,9 14.6,11.6 C15.4,13.8 12,15.4 8,15.4 C4,15.4 0.6,13.8 1.4,11.6 C4,9 5.6,7 5.6,2 Z" fill="#f6d21c" stroke="#5a4600" stroke-width=".9"/>
<ellipse cx="8" cy="2" rx="2.4" ry="1" fill="#fff0a0" stroke="#5a4600" stroke-width=".6"/></svg>
<svg style="left:7px;top:256px;overflow:visible;" width="16" height="16" viewBox="0 0 16 16"><polygon points="1,4 5,1 14,1 14,11 10,15 1,15" fill="#f6d21c" stroke="#5a4600" stroke-width=".9"/>
<polygon points="1,4 10,4 10,15 1,15" fill="#fff0a0" stroke="#5a4600" stroke-width=".9"/><path d="M10,4 L14,1" stroke="#5a4600" stroke-width=".9"/><path d="M6.4,2.4 C6.6,8 5,10 3.4,15 H11.6 C10.4,10 9,8 9.4,2.4 Z" fill="#2ccc3c" stroke="#0a6a16" stroke-width=".8"/></svg>
<svg style="left:7px;top:287px;overflow:visible;" width="16" height="16" viewBox="0 0 16 16"><polygon points="1,6 6,1 14.6,5 14.6,12 10,15.4 1,13" fill="#f6d21c" stroke="#5a4600" stroke-width=".9"/>
<path d="M1,6 C3,2 7,0.4 11,1.6 L14.6,5 C10,4 7,6 6,9.4 Z" fill="#2ccc3c" stroke="#0a6a16" stroke-width=".8"/><path d="M6,9.4 L10,15.4 M6,9.4 L14.6,5" stroke="#5a4600" stroke-width=".7" fill="none"/></svg>
<svg style="left:7px;top:310px;overflow:visible;" width="16" height="16" viewBox="0 0 16 16"><polygon points="1,7 6,2 14.6,5 14.6,12 10,15.4 1,13" fill="#f6d21c" stroke="#5a4600" stroke-width=".9"/>
<polygon points="1,7 6,1.6 11,3.6 6,9.6" fill="#2ccc3c" stroke="#0a6a16" stroke-width=".8"/><path d="M6,9.6 L10,15.4 M6,9.6 L14.6,5" stroke="#5a4600" stroke-width=".7" fill="none"/></svg>
<svg style="left:7px;top:333px;overflow:visible;" width="16" height="16" viewBox="0 0 16 16"><polygon points="1,11 8,7 15,11 15,13 8,15.6 1,13" fill="#f6d21c" stroke="#5a4600" stroke-width=".9"/>
<polygon points="8,0.6 12.6,3 12.6,10 8,12.6 3,10 8,7.6" fill="#f6d21c" stroke="#5a4600" stroke-width=".9"/><polygon points="8,3.4 10.6,5 10.6,9 8,10.8 5.4,9.6 8,7.6" fill="#2ccc3c" stroke="#0a6a16" stroke-width=".7"/></svg>
<svg style="left:7px;top:356px;overflow:visible;" width="16" height="16" viewBox="0 0 16 16"><polygon points="1,3.4 5,0.8 14.6,0.8 14.6,11.6 10.6,15.2 1,15.2" fill="#f6d21c" stroke="#5a4600" stroke-width=".9"/>
<polygon points="4,5.6 13,3 13,11 10,13.6 4,13.6" fill="#2ccc3c" stroke="#0a6a16" stroke-width=".8"/><polygon points="5.4,7 11,5.6 11,10.6 9.4,12 5.4,12" fill="#128a22"/></svg>
<svg style="left:7px;top:379px;overflow:visible;" width="16" height="16" viewBox="0 0 16 16"><polygon points="1,1.4 9,0.6 15,9 15,15.2 10,15.4 1,6" fill="#2ccc3c" stroke="#0a6a16" stroke-width=".9"/><path d="M1,6 L9,5 L15,9 M9,5 L9,0.6" stroke="#0a6a16" stroke-width=".7" fill="none"/>
<rect x="10" y="10.4" width="5" height="5" fill="#f6d21c" stroke="#5a4600" stroke-width=".8"/></svg>
<svg style="left:7px;top:402px;overflow:visible;" width="16" height="16" viewBox="0 0 16 16"><path d="M1.6,9 V13 C1.6,16 14.4,16 14.4,13 V9 Z" fill="#f6d21c" stroke="#5a4600" stroke-width=".9"/>
<path d="M1.6,9 C1.6,-2 14.4,-2 14.4,9 C14.4,11.4 1.6,11.4 1.6,9 Z" fill="#2ccc3c" stroke="#0a6a16" stroke-width=".8"/><path d="M4,5 C5,2.6 7,1.8 9,2" stroke="#a0ffa8" stroke-width="1.2" fill="none"/></svg>
<svg style="left:7px;top:425px;overflow:visible;" width="16" height="16" viewBox="0 0 16 16"><polygon points="1,8 4,6 7,6.6 7,14.6 4,15.6 1,14.6" fill="#f6d21c" stroke="#5a4600" stroke-width=".8"/>
<polygon points="6,3 10,0.8 15,2.6 15,13 11,15.2 6,13" fill="#2ccc3c" stroke="#0a6a16" stroke-width=".8"/><path d="M6,3 L11,5 L15,2.6 M11,5 V15.2" stroke="#0a6a16" stroke-width=".7" fill="none"/><polygon points="7,4.4 10,5.6 10,13.6 7,12.4" fill="#8af09a"/></svg>
<svg style="left:7px;top:448px;overflow:visible;" width="16" height="16" viewBox="0 0 16 16"><path d="M1,4 C1,1.4 15,1.4 15,4 V12 C15,15 1,15 1,12 Z" fill="#f6d21c" stroke="#5a4600" stroke-width=".9"/><ellipse cx="8" cy="4" rx="7" ry="2.2" fill="#fff0a0" stroke="#5a4600" stroke-width=".7"/>
<rect x="2.6" y="7.4" width="10.8" height="5.6" fill="#2ccc3c" stroke="#0a6a16" stroke-width=".7"/><path d="M8,8.4 H5 V12 H8 M9.6,8.4 H12 M10.8,8.4 V12 M9.6,12 H12" stroke="#0a5a14" stroke-width="1" fill="none"/></svg>
<svg style="left:7px;top:471px;overflow:visible;" width="16" height="16" viewBox="0 0 16 16"><polygon points="1,5 5,3 9,4 9,13 5,14.6 1,13" fill="#c8cad4" stroke="#9a9ca8" stroke-width=".9"/><path d="M6,2.6 C6,0.6 13,0.6 13,2.6 V10 C13,12 6,12 6,10 Z" fill="#cfd1da" stroke="#9a9ca8" stroke-width=".9"/>
<path d="M14.6,4 V14 M13,12 L14.6,14.6 L16.2,12" stroke="#a0a2ae" stroke-width="1.1" fill="none"/></svg>
<svg style="left:7px;top:494px;overflow:visible;" width="16" height="16" viewBox="0 0 16 16"><rect x="1.6" y="5" width="10" height="10" fill="#f6d21c" stroke="#5a4600" stroke-width=".9"/><polygon points="1.6,5 4,2.8 13.6,2.8 11.6,5" fill="#fff0a0" stroke="#5a4600" stroke-width=".7"/>
<circle cx="6.6" cy="10" r="2.6" fill="#2ccc3c" stroke="#0a6a16" stroke-width=".8"/><path d="M9,0.6 L15.4,7" stroke="#1a1a1a" stroke-width="2"/><path d="M2.4,0.4 L3.4,1.8 M5,0 L5.4,1.6 M13.4,0 L12.6,1.4" stroke="#e06010" stroke-width=".9"/></svg>
<svg style="left:7px;top:517px;overflow:visible;" width="16" height="16" viewBox="0 0 16 16"><polygon points="4,2 8,0.6 12,2 12,8 8,9.6 4,8" fill="#f6d21c" stroke="#5a4600" stroke-width=".8"/>
<polygon points="7,6 11.4,4.6 15.4,6 15.4,12.6 11.4,14.4 7,12.6" fill="#2ccc3c" stroke="#0a6a16" stroke-width=".8"/><rect x="9" y="8" width="5" height="5" fill="#d8e848" stroke="#5a4600" stroke-width=".6"/>
<path d="M1,9.6 L5,14 M5,14 L4.6,10.8 M5,14 L1.8,13.4" stroke="#1838c8" stroke-width="1.6" fill="none"/></svg>
<svg style="left:7px;top:540px;overflow:visible;" width="16" height="16" viewBox="0 0 16 16"><path d="M1,2.4 L4,0.8 L7,2.4 V11 L8.4,12.4 V15 L3,15.2 L1,13.4 Z" fill="#f6d21c" stroke="#5a4600" stroke-width=".9"/>
<path d="M9,2 L12,0.6 L15.2,2 V14 L12.6,15.4 L10.4,14 V5.6 L9,4.4 Z" fill="#2ccc3c" stroke="#0a6a16" stroke-width=".9"/></svg>
<svg style="left:7px;top:570px;overflow:visible;" width="16" height="16" viewBox="0 0 16 16"><rect x="0.6" y="0.6" width="3" height="6" rx="1.5" fill="#22b032" stroke="#0a5a14" stroke-width=".8"/><rect x="1.2999999999999998" y="1.6" width="1" height="3.6" fill="#fff" opacity=".35"/><rect x="6.4" y="0.6" width="3" height="6" rx="1.5" fill="#22b032" stroke="#0a5a14" stroke-width=".8"/><rect x="7.1000000000000005" y="1.6" width="1" height="3.6" fill="#fff" opacity=".35"/><rect x="12.2" y="0.6" width="3" height="6" rx="1.5" fill="#22b032" stroke="#0a5a14" stroke-width=".8"/><rect x="12.899999999999999" y="1.6" width="1" height="3.6" fill="#fff" opacity=".35"/><rect x="0.6" y="9" width="3" height="6" rx="1.5" fill="#f6d21c" stroke="#5a4600" stroke-width=".8"/><rect x="1.2999999999999998" y="10" width="1" height="3.6" fill="#fff" opacity=".35"/><rect x="6.4" y="9" width="3" height="6" rx="1.5" fill="#22b032" stroke="#0a5a14" stroke-width=".8"/><rect x="7.1000000000000005" y="10" width="1" height="3.6" fill="#fff" opacity=".35"/><rect x="12.2" y="9" width="3" height="6" rx="1.5" fill="#22b032" stroke="#0a5a14" stroke-width=".8"/><rect x="12.899999999999999" y="10" width="1" height="3.6" fill="#fff" opacity=".35"/></svg>
<svg style="left:7px;top:594px;overflow:visible;" width="16" height="16" viewBox="0 0 16 16"><rect x="4" y="0" width="3" height="6" rx="1.5" fill="#22b032" stroke="#0a5a14" stroke-width=".8"/><rect x="4.7" y="1" width="1" height="3.6" fill="#fff" opacity=".35"/><rect x="9" y="0" width="3" height="6" rx="1.5" fill="#22b032" stroke="#0a5a14" stroke-width=".8"/><rect x="9.7" y="1" width="1" height="3.6" fill="#fff" opacity=".35"/><rect x="12.6" y="4.6" width="3" height="6" rx="1.5" fill="#22b032" stroke="#0a5a14" stroke-width=".8"/><rect x="13.299999999999999" y="5.6" width="1" height="3.6" fill="#fff" opacity=".35"/><rect x="9.4" y="9.6" width="3" height="6" rx="1.5" fill="#22b032" stroke="#0a5a14" stroke-width=".8"/><rect x="10.1" y="10.6" width="1" height="3.6" fill="#fff" opacity=".35"/><rect x="4" y="9.6" width="3" height="6" rx="1.5" fill="#22b032" stroke="#0a5a14" stroke-width=".8"/><rect x="4.7" y="10.6" width="1" height="3.6" fill="#fff" opacity=".35"/><rect x="0.6" y="5" width="3" height="6" rx="1.5" fill="#f6d21c" stroke="#5a4600" stroke-width=".8"/><rect x="1.2999999999999998" y="6" width="1" height="3.6" fill="#fff" opacity=".35"/></svg>
<svg style="left:7px;top:613px;" width="16" height="5" viewBox="0 0 16 5"><rect x="1.5" y="1" width="4" height="5" fill="#e07830"/><rect x="9" y="1" width="4" height="5" fill="#c85858"/></svg>
<svg style="left:38px;top:94px;overflow:visible;" width="16" height="16" viewBox="0 0 16 16"><path d="M10,1.4 H2.6 V10 C2.6,13.4 4.4,14.6 8,14.6 H15.4" fill="none" stroke="#10109a" stroke-width="1.7"/><path d="M5.4,8.6 L14,3.4" stroke="#a87c10" stroke-width="3.4" stroke-linecap="round"/><path d="M5.4,8.6 L14,3.4" stroke="#f6d63c" stroke-width="2.2" stroke-linecap="round"/><circle cx="14" cy="3.4" r="1.1" fill="#e8a0a0"/></svg>
<svg style="left:38px;top:117px;overflow:visible;" width="16" height="16" viewBox="0 0 16 16"><text x="0" y="6" font-family="Liberation Sans,sans-serif" font-weight="bold" font-size="6.6" fill="#b02020" textLength="8.6" lengthAdjust="spacingAndGlyphs">3D</text><path d="M1.6,11 V15 H7 M10,15.4 L12,13.4 M12,10.4 V13.4 L14.6,14" fill="none" stroke="#10109a" stroke-width="1.5"/><path d="M3,10.4 L13.6,5.2" stroke="#a87c10" stroke-width="3.4" stroke-linecap="round"/><path d="M3,10.4 L13.6,5.2" stroke="#f6d63c" stroke-width="2.2" stroke-linecap="round"/><circle cx="13.6" cy="5.2" r="1.1" fill="#e8a0a0"/></svg>
<svg style="left:38px;top:142px;overflow:visible;" width="16" height="16" viewBox="0 0 16 16"><polygon points="2,9.4 9.4,2.4 14.6,6.4 7,13.6" fill="#eef2ff" stroke="#1838c0" stroke-width="2"/><path d="M7.4,1 L11,3.6 M11.6,0.8 L10.6,3.6" stroke="#1838c0" stroke-width="1.2"/><path d="M5.2,10.8 L8,13" stroke="#101010" stroke-width="1.8"/></svg>
<svg style="left:38px;top:172px;overflow:visible;" width="16" height="16" viewBox="0 0 16 16"><path d="M0.8,1.4 L15.4,14.8" stroke="#10109a" stroke-width="1.9"/></svg>
<svg style="left:38px;top:195px;overflow:visible;" width="16" height="16" viewBox="0 0 16 16"><rect x="1.2" y="2.6" width="13.6" height="10.4" fill="none" stroke="#10109a" stroke-width="1.8"/><rect x="13.4" y="1.5999999999999999" width="2.4" height="2.4" fill="#fff" stroke="#c81828" stroke-width=".8"/><rect x="0.19999999999999996" y="11.600000000000001" width="2.4" height="2.4" fill="#fff" stroke="#c81828" stroke-width=".8"/></svg>
<svg style="left:38px;top:218px;overflow:visible;" width="16" height="16" viewBox="0 0 16 16"><polygon points="8,1 15,8.6 8,15 1.4,8.6" fill="none" stroke="#10109a" stroke-width="1.9"/><rect x="0.40000000000000013" y="7.3999999999999995" width="2.4" height="2.4" fill="#fff" stroke="#c81828" stroke-width=".8"/><rect x="13.4" y="7.8" width="2.4" height="2.4" fill="#fff" stroke="#c81828" stroke-width=".8"/><rect x="8.200000000000001" y="12.8" width="2.4" height="2.4" fill="#fff" stroke="#c81828" stroke-width=".8"/></svg>
<svg style="left:38px;top:241px;overflow:visible;" width="16" height="16" viewBox="0 0 16 16"><rect x="1.2" y="2.6" width="13.6" height="10.4" fill="none" stroke="#10109a" stroke-width="1.8"/><rect x="13.4" y="1.5999999999999999" width="2.4" height="2.4" fill="#fff" stroke="#c81828" stroke-width=".8"/><rect x="6.8" y="6.8" width="2.4" height="2.4" fill="#fff" stroke="#c81828" stroke-width=".8"/></svg>
<svg style="left:38px;top:264px;overflow:visible;" width="16" height="16" viewBox="0 0 16 16"><polygon points="7,0.8 15.2,8 9,15.2 0.8,8.4" fill="none" stroke="#10109a" stroke-width="1.9"/><rect x="6.2" y="4.8" width="2.4" height="2.4" fill="#fff" stroke="#c81828" stroke-width=".8"/><rect x="9.4" y="8.4" width="2.4" height="2.4" fill="#fff" stroke="#c81828" stroke-width=".8"/><rect x="12.4" y="5.8" width="2.4" height="2.4" fill="#fff" stroke="#c81828" stroke-width=".8"/></svg>
<svg style="left:38px;top:288px;overflow:visible;" width="16" height="16" viewBox="0 0 16 16"><polygon points="4.4,3.4 15,3.4 11,12.6 1,12.6" fill="none" stroke="#10109a" stroke-width="1.8"/><rect x="13.4" y="2.2" width="2.4" height="2.4" fill="#fff" stroke="#c81828" stroke-width=".8"/><rect x="9.4" y="11.200000000000001" width="2.4" height="2.4" fill="#fff" stroke="#c81828" stroke-width=".8"/><rect x="0.19999999999999996" y="11.200000000000001" width="2.4" height="2.4" fill="#fff" stroke="#c81828" stroke-width=".8"/></svg>
<svg style="left:38px;top:310px;overflow:visible;" width="16" height="16" viewBox="0 0 16 16"><circle cx="8" cy="8.4" r="6.6" fill="none" stroke="#10109a" stroke-width="1.7"/><path d="M8,8.4 L12.6,3.4" stroke="#c81828" stroke-width=".9"/><rect x="6.8" y="7.2" width="2.4" height="2.4" fill="#fff" stroke="#c81828" stroke-width=".8"/><rect x="11.600000000000001" y="2.0" width="2.4" height="2.4" fill="#fff" stroke="#c81828" stroke-width=".8"/></svg>
<svg style="left:38px;top:332px;overflow:visible;" width="16" height="16" viewBox="0 0 16 16"><path d="M4,3.4 C8,0.6 14,3 14.6,8" fill="none" stroke="#10109a" stroke-width="1.7"/><path d="M4,3.4 L8.6,9.4" stroke="#c81828" stroke-width=".9"/><rect x="2.8" y="2.2" width="2.4" height="2.4" fill="#fff" stroke="#c81828" stroke-width=".8"/><rect x="7.3999999999999995" y="8.200000000000001" width="2.4" height="2.4" fill="#fff" stroke="#c81828" stroke-width=".8"/><rect x="13.200000000000001" y="6.3999999999999995" width="2.4" height="2.4" fill="#fff" stroke="#c81828" stroke-width=".8"/><path d="M1.6,9.6 h1.6 M3.4,13.4 h1.6 M8,15 h1.6 M12.4,13.4 h1.6 M14.2,10.4 h1.4" stroke="#1a1a2a" stroke-width="1.5"/></svg>
<svg style="left:38px;top:356px;overflow:visible;" width="16" height="16" viewBox="0 0 16 16"><path d="M0.8,2.6 H8" stroke="#1a1a2a" stroke-width="1.6"/><path d="M8,2.6 C17,2.6 17,15 8.6,15" fill="none" stroke="#10109a" stroke-width="1.7"/><path d="M8.6,6.4 V11.4 M6,9 H11.2" stroke="#2a2a3a" stroke-width="1"/><rect x="7.2" y="1.4000000000000001" width="2.4" height="2.4" fill="#fff" stroke="#c81828" stroke-width=".8"/><rect x="7.3999999999999995" y="13.8" width="2.4" height="2.4" fill="#fff" stroke="#c81828" stroke-width=".8"/></svg>
<svg style="left:38px;top:380px;overflow:visible;" width="16" height="16" viewBox="0 0 16 16"><path d="M2,13 C2,3.4 14,3.4 14,13" fill="none" stroke="#10109a" stroke-width="1.7"/><path d="M8,9.4 V14 M5.6,11.8 H10.4" stroke="#2a2a3a" stroke-width="1"/><rect x="6.8" y="4.3999999999999995" width="2.4" height="2.4" fill="#fff" stroke="#c81828" stroke-width=".8"/><rect x="0.8" y="12.200000000000001" width="2.4" height="2.4" fill="#fff" stroke="#c81828" stroke-width=".8"/><rect x="12.8" y="12.200000000000001" width="2.4" height="2.4" fill="#fff" stroke="#c81828" stroke-width=".8"/></svg>
<svg style="left:38px;top:402px;overflow:visible;" width="16" height="16" viewBox="0 0 16 16"><path d="M8,0 V16" stroke="#0c0c5a" stroke-width="1.9" stroke-dasharray="3.6,1.4,1.4,1.4"/></svg>
<svg style="left:38px;top:424px;overflow:visible;" width="16" height="16" viewBox="0 0 16 16"><path d="M1,15.6 V11 C1,5 7,5.6 8,9 C9,12 15,12.6 15,6 V0.6" fill="none" stroke="#10109a" stroke-width="2"/></svg>
<svg style="left:38px;top:448px;overflow:visible;" width="16" height="16" viewBox="0 0 16 16"><path d="M0.6,1.6 H5.6 L14.4,10.4 V15.4" fill="none" stroke="#a0a2b0" stroke-width="2"/></svg>
<svg style="left:38px;top:471px;overflow:visible;" width="16" height="16" viewBox="0 0 16 16"><path d="M0.6,1.6 H8 C12,1.6 14.4,4 14.4,8 V15.4" fill="none" stroke="#a0a2b0" stroke-width="2"/><path d="M6,8 V12.6 M3.6,10.4 H8.4" stroke="#a6a8b6" stroke-width="1"/></svg>
<svg style="left:38px;top:494px;overflow:visible;" width="16" height="16" viewBox="0 0 16 16"><path d="M8,3 V13.6 M2.8,8.4 H13.2 M4.4,4.6 L11.6,12 M11.6,4.6 L4.4,12" stroke="#1828c8" stroke-width="1.3"/></svg>
<svg style="left:38px;top:517px;overflow:visible;" width="16" height="16" viewBox="0 0 16 16"><ellipse cx="8" cy="8" rx="8" ry="4.2" transform="rotate(-38 8 8)" fill="none" stroke="#10109a" stroke-width="2"/><path d="M7.4,6.6 L9.6,8.8 M9.6,6.6 L7.4,8.8" stroke="#2a2a2a" stroke-width=".9"/></svg>
<svg style="left:38px;top:540px;overflow:visible;" width="16" height="16" viewBox="0 0 16 16"><rect x="1" y="3.6" width="14" height="8.8" rx="4.4" fill="none" stroke="#10109a" stroke-width="2.1"/><rect x="3.5999999999999996" y="6.8" width="2.4" height="2.4" fill="#fff" stroke="#c81828" stroke-width=".8"/><rect x="10.0" y="6.8" width="2.4" height="2.4" fill="#fff" stroke="#c81828" stroke-width=".8"/></svg>
<svg style="left:38px;top:563px;overflow:visible;" width="16" height="16" viewBox="0 0 16 16"><polygon points="5,2.4 11,2.4 14.4,8 11,13.6 5,13.6 1.6,8" fill="none" stroke="#10109a" stroke-width="2"/><path d="M8,5.4 V10.6 M5.4,8 H10.6" stroke="#2a3a2a" stroke-width="1"/></svg>
<svg style="left:38px;top:586px;overflow:visible;" width="16" height="16" viewBox="0 0 16 16"><circle cx="8" cy="2.6" r="2" fill="#b0b2bc" stroke="#90929c" stroke-width=".7"/><circle cx="2.8" cy="7.4" r="2" fill="#b0b2bc" stroke="#90929c" stroke-width=".7"/><circle cx="13" cy="7.4" r="2" fill="#b0b2bc" stroke="#90929c" stroke-width=".7"/><circle cx="5" cy="13.4" r="2" fill="#b0b2bc" stroke="#90929c" stroke-width=".7"/><circle cx="11" cy="13.4" r="2" fill="#b0b2bc" stroke="#90929c" stroke-width=".7"/></svg>
<svg style="left:37px;top:609px;" width="16" height="10" viewBox="0 0 16 10"><rect x="0.6" y="0.6" width="3.2" height="3.2" fill="#c6c8d0" stroke="#9c9ea8" stroke-width=".9"/><rect x="6.4" y="0.6" width="3.2" height="3.2" fill="#c6c8d0" stroke="#9c9ea8" stroke-width=".9"/><rect x="12.2" y="0.6" width="3.2" height="3.2" fill="#c6c8d0" stroke="#9c9ea8" stroke-width=".9"/><rect x="0.6" y="6.6" width="3.2" height="3.2" fill="#c6c8d0" stroke="#9c9ea8" stroke-width=".9"/><rect x="6.4" y="6.6" width="3.2" height="3.2" fill="#c6c8d0" stroke="#9c9ea8" stroke-width=".9"/><rect x="12.2" y="6.6" width="3.2" height="3.2" fill="#c6c8d0" stroke="#9c9ea8" stroke-width=".9"/></svg>
<div style="left:60px;top:78px;width:187px;height:1px;background:#bdc0d0;"></div>
<div style="left:60px;top:79px;width:187px;height:1px;background:#8f93a8;"></div>
<div style="left:60px;top:80px;width:187px;height:23px;background:linear-gradient(#d6d8e7,#d0d2e2);"></div>
<div style="left:60px;top:103px;width:187px;height:1px;background:#8d90a6;"></div>
<div style="left:60px;top:82px;width:26px;height:22px;box-sizing:border-box;border:1px solid #a2a5ba;border-bottom:none;border-radius:5px 5px 0 0;background:#e6e8f1;"></div>
<div style="left:87px;top:82px;width:26px;height:21px;box-sizing:border-box;border:1px solid #8d90a6;border-bottom:none;border-radius:5px 5px 0 0;background:linear-gradient(#bfc1d3,#b5b7ca);"></div>
<div style="left:115px;top:82px;width:26px;height:21px;box-sizing:border-box;border:1px solid #8d90a6;border-bottom:none;border-radius:5px 5px 0 0;background:linear-gradient(#bfc1d3,#b5b7ca);"></div>
<div style="left:143px;top:82px;width:26px;height:21px;box-sizing:border-box;border:1px solid #8d90a6;border-bottom:none;border-radius:5px 5px 0 0;background:linear-gradient(#bfc1d3,#b5b7ca);"></div>
<svg style="left:63px;top:84px;" width="17" height="17" viewBox="0 0 17 17"><path d="M1,3.4 L4.2,1 L6.6,2.4 L6.6,4 L8.2,2.2 L11.4,1.4 L12.6,4 L12.2,6.6 L15.8,9.4 L15.8,12.6 L11.2,15.8 L8.6,13.6 L1,6.6 Z" fill="#f6d21c" stroke="#1a1400" stroke-width="1.5" stroke-linejoin="round"/>
<path d="M1.4,3.6 L11.2,12 L15.6,9.6 M11.2,12 V15.4 M4.4,1.4 L3.4,3.4 L5,5.4 M7.4,4.6 L8.6,7.4 L12,6.8 M8.4,2.6 L11.4,1.8" fill="none" stroke="#1a1400" stroke-width="1.1"/>
<path d="M2.2,5.6 L9.8,12.4" stroke="#fff4a8" stroke-width="1"/></svg>
<svg style="left:91px;top:85px;" width="17" height="17" viewBox="0 0 17 17"><rect x="0.8" y="3.6" width="10.6" height="12.2" fill="#ffffff" stroke="#14141c" stroke-width="1.3"/><path d="M2.6,7.4 H9.6 M2.6,9.6 H9.6 M2.6,11.8 H9.6 M2.6,13.8 H9.6" stroke="#58a0ec" stroke-width="1"/>
<path d="M5.6,5.4 L9.6,1 L15.6,1.6 L16,5 L11,7.6 Z" fill="#f2c890" stroke="#7a5a2a" stroke-width=".8"/><path d="M7.4,4.4 L11,7 M9,2.6 L12.6,5.6 M3.6,6.6 L5.6,5.2" stroke="#5a4420" stroke-width=".7"/></svg>
<svg style="left:119px;top:84px;" width="17" height="17" viewBox="0 0 17 17"><path d="M2.4,0.4 V16 M2.4,4.6 H6.4 M2.4,13.6 H9.6" fill="none" stroke="#14141c" stroke-width="1.2"/>
<rect x="6.2" y="1.4" width="6.6" height="6.4" rx="2" fill="#f6e020" stroke="#14140c" stroke-width="1.2"/><rect x="9.6" y="10.2" width="6.6" height="6.4" rx="2" fill="#f6e020" stroke="#14140c" stroke-width="1.2"/></svg>
<svg style="left:147px;top:84px;" width="17" height="17" viewBox="0 0 17 17"><circle cx="8.6" cy="8.9" r="5" fill="none" stroke="#c85ad8" stroke-width="1.6"/><path d="M8.6,1 V16.8 M0.8,8.9 H16.4" stroke="#c85ad8" stroke-width="1.5"/><circle cx="8.6" cy="8.9" r="1.3" fill="#e6dcee"/></svg>
<svg style="left:232px;top:88.5px;" width="10" height="9" viewBox="0 0 10 9"><path d="M1,0.8 L4.4,4.4 L1,8 M5.6,0.8 L9,4.4 L5.6,8" fill="none" stroke="#5a5c70" stroke-width="1.2"/></svg>
<div style="left:60px;top:106px;width:186px;height:17px;box-sizing:border-box;border:1px solid #8d90a6;border-radius:9px;background:linear-gradient(#d4d6e0,#fafbfd 40%,#ffffff);box-shadow:inset 0 1px 1px rgba(90,94,120,.4);"></div>
<svg style="left:66px;top:108.5px;" width="13" height="13" viewBox="0 0 13 13"><path d="M0.9,1 H11.3 L7.6,5.4 V11 H4.6 V5.4 Z" fill="#86d4ff" stroke="#1630b8" stroke-width="1.4" stroke-linejoin="round"/><path d="M3.4,2.6 H8.8 M6.1,5.4 V9.6" stroke="#e8f8ff" stroke-width="1"/></svg>
<svg style="left:60px;top:127px;" width="17" height="17" viewBox="0 0 17 17"><path d="M1,3.4 L4.2,1 L6.6,2.4 L6.6,4 L8.2,2.2 L11.4,1.4 L12.6,4 L12.2,6.6 L15.8,9.4 L15.8,12.6 L11.2,15.8 L8.6,13.6 L1,6.6 Z" fill="#f6d21c" stroke="#1a1400" stroke-width="1.5" stroke-linejoin="round"/>
<path d="M1.4,3.6 L11.2,12 L15.6,9.6 M11.2,12 V15.4 M4.4,1.4 L3.4,3.4 L5,5.4 M7.4,4.6 L8.6,7.4 L12,6.8 M8.4,2.6 L11.4,1.8" fill="none" stroke="#1a1400" stroke-width="1.1"/>
<path d="M2.2,5.6 L9.8,12.4" stroke="#fff4a8" stroke-width="1"/></svg>
<span class="t" style="left:82px;top:129px;font-size:11px;color:#101018;letter-spacing:-0.33px;">Teil1</span>
<svg style="left:0px;top:0px;" width="260" height="300" viewBox="0 0 260 300"><path d="M68.5,142 V262" stroke="#8a8c9a" stroke-width="1" stroke-dasharray="1,1"/><path d="M69,153.5 H79" stroke="#8a8c9a" stroke-width="1" stroke-dasharray="1,1"/><path d="M69,171.5 H79" stroke="#8a8c9a" stroke-width="1" stroke-dasharray="1,1"/><path d="M69,189.5 H79" stroke="#8a8c9a" stroke-width="1" stroke-dasharray="1,1"/><path d="M69,207.5 H79" stroke="#8a8c9a" stroke-width="1" stroke-dasharray="1,1"/><path d="M69,225.5 H79" stroke="#8a8c9a" stroke-width="1" stroke-dasharray="1,1"/><path d="M69,243.5 H79" stroke="#8a8c9a" stroke-width="1" stroke-dasharray="1,1"/><path d="M69,261.5 H79" stroke="#8a8c9a" stroke-width="1" stroke-dasharray="1,1"/></svg>
<svg style="left:64px;top:149px;" width="9" height="9" viewBox="0 0 9 9"><rect x="0.5" y="0.5" width="8" height="8" fill="#fbfbfd" stroke="#8a8ca0" stroke-width="1"/><path d="M2.5,4.5 H6.5 M4.5,2.5 V6.5" stroke="#0a0a10" stroke-width="1"/></svg>
<svg style="left:64px;top:257px;" width="9" height="9" viewBox="0 0 9 9"><rect x="0.5" y="0.5" width="8" height="8" fill="#fbfbfd" stroke="#8a8ca0" stroke-width="1"/><path d="M2.5,4.5 H6.5 M4.5,2.5 V6.5" stroke="#0a0a10" stroke-width="1"/></svg>
<span class="t" style="left:100px;top:147.5px;font-size:11px;color:#101018;letter-spacing:-0.24px;">Beschriftungen</span>
<span class="t" style="left:100px;top:165.5px;font-size:11px;color:#101018;letter-spacing:-0.19px;">Material &lt;nicht festgelegt&gt;</span>
<span class="t" style="left:100px;top:183.5px;font-size:11px;color:#101018;letter-spacing:-0.22px;">Ebene vorne</span>
<span class="t" style="left:100px;top:201.5px;font-size:11px;color:#101018;letter-spacing:-0.23px;">Ebene oben</span>
<span class="t" style="left:100px;top:219.5px;font-size:11px;color:#101018;letter-spacing:-0.24px;">Ebene rechts</span>
<span class="t" style="left:100px;top:237.5px;font-size:11px;color:#101018;letter-spacing:-0.41px;">Ursprung</span>
<span class="t" style="left:100px;top:255.5px;font-size:11px;color:#101018;letter-spacing:-0.28px;">Linear austragen1</span>
<svg style="left:79px;top:144px;" width="17" height="17" viewBox="0 0 17 17"><path d="M1,3 H5.6 L7,4.6 H15.6 V15.4 H1 Z" fill="#f8d848" stroke="#c89a10" stroke-width=".9"/><rect x="1.4" y="5.4" width="13.8" height="9.6" fill="#fde88a"/>
<text x="8.4" y="14.4" text-anchor="middle" font-family="Liberation Serif,serif" font-weight="bold" font-size="11.5" fill="#2828c0">A</text></svg>
<svg style="left:79px;top:163px;" width="17" height="17" viewBox="0 0 17 17"><circle cx="3" cy="3" r="2.3" fill="#e02828"/><circle cx="3" cy="8.4" r="2.3" fill="#2848e0"/><circle cx="3" cy="13.8" r="2.3" fill="#20b838"/>
<path d="M7.4,3.4 H16 M7.4,8.6 H16 M7.4,13.8 H16" stroke="#1a1a22" stroke-width="1.7"/></svg>
<svg style="left:78px;top:181px;" width="17" height="17" viewBox="0 0 17 17"><polygon points="8,2 14.8,8.2 8.4,14.4 1.8,8.2" fill="#f4f5fa" stroke="#1a1a22" stroke-width="1"/><path d="M1,1 L4.4,4.4 M12.6,12 L16,15.6 M7,6 L11,10" stroke="#1a1a22" stroke-width="1"/></svg>
<svg style="left:78px;top:199px;" width="17" height="17" viewBox="0 0 17 17"><polygon points="8,2 14.8,8.2 8.4,14.4 1.8,8.2" fill="#f4f5fa" stroke="#1a1a22" stroke-width="1"/><path d="M1,1 L4.4,4.4 M12.6,12 L16,15.6 M7,6 L11,10" stroke="#1a1a22" stroke-width="1"/></svg>
<svg style="left:78px;top:217px;" width="17" height="17" viewBox="0 0 17 17"><polygon points="8,2 14.8,8.2 8.4,14.4 1.8,8.2" fill="#f4f5fa" stroke="#1a1a22" stroke-width="1"/><path d="M1,1 L4.4,4.4 M12.6,12 L16,15.6 M7,6 L11,10" stroke="#1a1a22" stroke-width="1"/></svg>
<svg style="left:79px;top:235px;" width="17" height="17" viewBox="0 0 17 17"><path d="M4.6,13.4 V3 M4.6,13.4 H14" stroke="#b01828" stroke-width="1.4"/><polygon points="4.6,0.6 2.4,4 6.8,4" fill="#b01828"/><polygon points="16.4,13.4 13,11.2 13,15.6" fill="#b01828"/>
<path d="M2.2,11 L7,15.8 M7,11 L2.2,15.8 M4.6,10.4 V16.4 M1.4,13.4 H7.8" stroke="#14141c" stroke-width=".8"/></svg>
<svg style="left:79px;top:252px;" width="18" height="18" viewBox="0 0 18 18"><polygon points="1,3.4 4,1 13.6,1 13.6,11 10.6,14.6 1,14.6" fill="#f6d21c" stroke="#1a1400" stroke-width="1.2"/><rect x="1" y="3.6" width="9.6" height="11" rx="1" fill="#fff0a0" stroke="#1a1400" stroke-width="1.1"/>
<polygon points="6,7 9.6,6 13.6,9.6 15.6,11 15.6,16.6 11,16.6 9.6,15 6,11" fill="#2ccc3c" stroke="#0c6a18" stroke-width=".8"/><rect x="10.6" y="11.6" width="5" height="5" fill="#60e870" stroke="#0c6a18" stroke-width=".7"/></svg>
<div style="left:60px;top:269px;width:186px;height:4px;background:linear-gradient(#8aa4cc 0,#8aa4cc 25%,#1f4e92 25%,#1f4e92 50%,#2c5ba0 50%,#2c5ba0 75%,#ccd6ea 75%);"></div>
<svg style="left:246px;top:457px;" width="12" height="32" viewBox="0 0 12 32"><path d="M2,1.5 H8 Q10.5,1.5 10.5,4 V27 Q10.5,29.5 8,29.5 H2" fill="#eceef6" stroke="#5c6078" stroke-width="1.3"/><rect x="0" y="2.2" width="2.6" height="26.6" fill="#eceef6"/>
<polygon points="7.6,6 7.6,11 4.2,8.5" fill="#5c6078"/><polygon points="7.6,13 7.6,18 4.2,15.5" fill="#5c6078"/><polygon points="7.6,20 7.6,25 4.2,22.5" fill="#5c6078"/></svg>
<svg style="left:1370px;top:85px;" width="60" height="14" viewBox="0 0 60 14">
<rect x="1" y="8.5" width="7.5" height="2.6" fill="#7e8090"/>
<g fill="none" stroke="#666878" stroke-width="1.3"><rect x="26.5" y="1.6" width="8" height="6"/><rect x="23.5" y="5.2" width="8.5" height="6.3" fill="#dcdde2"/></g>
<rect x="26.5" y="1.2" width="8" height="2" fill="#666878"/><rect x="23.5" y="4.8" width="8.5" height="2" fill="#666878"/>
<path d="M47,2 L56,11.5 M56,2 L47,11.5" stroke="#7e8090" stroke-width="2.2"/></svg>
<div style="left:1426px;top:78px;width:10px;height:540px;background:#c7cad1;"></div>
<div style="left:1415px;top:137px;width:24px;height:24px;box-sizing:border-box;border:1px solid #8487a0;border-right:none;border-radius:5px 0 0 5px;background:linear-gradient(#cdcfdf,#c0c2d5);box-shadow:inset 1px 1px 0 rgba(240,241,248,.7);"></div>
<div style="left:1415px;top:161px;width:24px;height:24px;box-sizing:border-box;border:1px solid #8487a0;border-right:none;border-radius:5px 0 0 5px;background:linear-gradient(#eceef6,#e2e4ee);box-shadow:inset 1px 1px 0 rgba(240,241,248,.7);"></div>
<div style="left:1415px;top:185px;width:24px;height:24px;box-sizing:border-box;border:1px solid #8487a0;border-right:none;border-radius:5px 0 0 5px;background:linear-gradient(#cdcfdf,#c0c2d5);box-shadow:inset 1px 1px 0 rgba(240,241,248,.7);"></div>
<div style="left:1415px;top:209px;width:24px;height:24px;box-sizing:border-box;border:1px solid #8487a0;border-right:none;border-radius:5px 0 0 5px;background:linear-gradient(#cdcfdf,#c0c2d5);box-shadow:inset 1px 1px 0 rgba(240,241,248,.7);"></div>
<div style="left:1415px;top:233px;width:24px;height:24px;box-sizing:border-box;border:1px solid #8487a0;border-right:none;border-radius:5px 0 0 5px;background:linear-gradient(#cdcfdf,#c0c2d5);box-shadow:inset 1px 1px 0 rgba(240,241,248,.7);"></div>
<div style="left:1415px;top:257px;width:24px;height:24px;box-sizing:border-box;border:1px solid #8487a0;border-right:none;border-radius:5px 0 0 5px;background:linear-gradient(#cdcfdf,#c0c2d5);box-shadow:inset 1px 1px 0 rgba(240,241,248,.7);"></div>
<div style="left:1415px;top:281px;width:24px;height:24px;box-sizing:border-box;border:1px solid #8487a0;border-right:none;border-radius:5px 0 0 5px;background:linear-gradient(#cdcfdf,#c0c2d5);box-shadow:inset 1px 1px 0 rgba(240,241,248,.7);"></div>
<svg style="left:1420px;top:141px;overflow:visible;" width="17" height="17" viewBox="0 0 17 17"><rect x="11.4" y="1.4" width="2.6" height="5" fill="#e03020" stroke="#7a1a10" stroke-width=".6"/>
<path d="M0.8,8.6 L8.4,1.2 L16,8.6" fill="none" stroke="#6a5200" stroke-width="2.6"/><path d="M0.8,8.6 L8.4,1.2 L16,8.6" fill="none" stroke="#f8dc30" stroke-width="1.3"/>
<rect x="3" y="8" width="11" height="7.8" fill="#fdf8c8" stroke="#6a5200" stroke-width="1"/><polygon points="3.4,8 8.4,3.2 13.6,8" fill="#fdf8c8"/>
<rect x="6.4" y="10" width="3.6" height="5.8" fill="#f0d020" stroke="#6a5200" stroke-width=".8"/></svg>
<svg style="left:1420px;top:165px;overflow:visible;" width="17" height="17" viewBox="0 0 17 17"><polygon points="1,9 4,7.4 6.4,9 6.4,15.6 1,15.6" fill="#28a838" stroke="#0a4a14" stroke-width=".9"/>
<polygon points="6,7 9,5 11.4,7 11.4,15.6 6,15.6" fill="#f2d020" stroke="#6a5200" stroke-width=".9"/>
<polygon points="11,4 13.6,1.6 16.4,4 16.4,15.6 11,15.6" fill="#3a70e0" stroke="#0a2a80" stroke-width=".9"/>
<path d="M1,6 L5,3.4 L9.6,3 L13,0.6" stroke="#143a14" stroke-width="1.4" fill="none" stroke-dasharray="2,1"/></svg>
<svg style="left:1420px;top:189px;overflow:visible;" width="17" height="17" viewBox="0 0 17 17"><path d="M1,3 H6 L7.6,4.8 H14 V14.6 H1 Z" fill="#e8b828" stroke="#8a6a00" stroke-width="1"/>
<path d="M0.8,14.6 L3.4,7 H16.6 L13.8,14.6 Z" fill="#fbe880" stroke="#8a6a00" stroke-width="1"/></svg>
<svg style="left:1420px;top:213px;overflow:visible;" width="17" height="17" viewBox="0 0 17 17"><circle cx="6.6" cy="7.6" r="6" fill="#d82028" stroke="#7a0a10" stroke-width=".8"/><circle cx="12.4" cy="5" r="3.6" fill="#e84048" stroke="#7a0a10" stroke-width=".6"/>
<text x="6.4" y="11" text-anchor="middle" font-family="Liberation Sans,sans-serif" font-weight="bold" font-size="9" fill="#fff">S</text>
<circle cx="12" cy="8.6" r="3.2" fill="#e8f0fa" stroke="#8a909c" stroke-width="1"/><path d="M13.8,11.4 L16.6,15.4" stroke="#3a80c8" stroke-width="2.2" stroke-linecap="round"/></svg>
<svg style="left:1420px;top:237px;overflow:visible;" width="17" height="17" viewBox="0 0 17 17"><rect x="2.4" y="0.6" width="14" height="10" fill="#fbfbfd" stroke="#1a1a22" stroke-width="1.1"/>
<rect x="4.2" y="2.2" width="4.4" height="2.2" fill="#f0c820" stroke="#8a6a00" stroke-width=".5"/><rect x="10.4" y="2.2" width="4.4" height="2.2" fill="#f0c820" stroke="#8a6a00" stroke-width=".5"/>
<path d="M4.4,8.6 L6,6.4 H8.6 L10,8.6 Z" fill="#f0c820" stroke="#8a6a00" stroke-width=".5"/><rect x="12" y="6.4" width="3.6" height="3" fill="#dfe3ee" stroke="#555" stroke-width=".5"/>
<path d="M1.6,13.8 H7 M5,11.4 L7.6,13.8 L5,16.2" fill="none" stroke="#1020c0" stroke-width="1.7"/></svg>
<svg style="left:1420px;top:261px;overflow:visible;" width="17" height="17" viewBox="0 0 17 17"><circle cx="9" cy="8.8" r="7.2" fill="#f0f0f0"/><path d="M9,8.8 L2.6,5.4 A7.2,7.2 0 0 1 13,2.8 Z" fill="#3a78e0"/><path d="M9,8.8 L13,2.8 A7.2,7.2 0 0 1 15.4,12.2 Z" fill="#e82828"/>
<path d="M9,8.8 L15.4,12.2 A7.2,7.2 0 0 1 5,14.8 Z" fill="#f0c020"/><path d="M9,8.8 L5,14.8 A7.2,7.2 0 0 1 2.6,5.4 Z" fill="#30b038"/><ellipse cx="8" cy="5" rx="4" ry="2.4" fill="#fff" opacity=".35"/></svg>
<svg style="left:1420px;top:285px;overflow:visible;" width="17" height="17" viewBox="0 0 17 17"><rect x="1.4" y="5" width="12.6" height="10.8" fill="#f8f8fa" stroke="#5a5c68" stroke-width="1.1"/><path d="M3.4,9.6 H12 M3.4,11.6 H12 M3.4,13.6 H12" stroke="#b8bac6" stroke-width=".9"/>
<path d="M3.6,5.6 L8.6,1 L15,1.4 L17,4.4 L13,6.6 L8,4.8 Z" fill="#f2c890" stroke="#6a4a20" stroke-width=".9"/><path d="M6,4.4 L9.4,6.6 M8,2.6 L11.4,5.6" stroke="#4a3410" stroke-width=".8"/></svg>
<svg style="left:0px;top:0px;mix-blend-mode:multiply;" width="1439" height="620" viewBox="0 0 1439 620"><path d="M292,24 C292,21.5 293,20.3 296,19.6 L296.5,17.4 C300,15.8 307,15.8 311,17.4 L312,20 L321.5,20 L322,17.4 C326,15.8 332,15.8 336,17.4 L336.5,20 L353.5,20 L360.7,28.5 L360.7,44 C360.2,47 358.4,49 356,49.8 C354,51.2 352.5,51.6 351,51.6 L322,51.6 C318,50.6 315,49.2 313,47.8 C308,46.6 303,45.6 299.8,44 C296,42.5 293.5,41 293,39.7 C292.2,38.4 292,37.6 292,37 Z" fill="#ffff00"/></svg>
<div style="left:0px;top:18px;width:1439px;height:2px;background:#f00000;"></div>
<div style="left:0px;top:18px;width:2px;height:602px;background:#f00000;"></div>
<div style="left:1437px;top:18px;width:2px;height:602px;background:#f00000;"></div>
<div style="left:0px;top:618px;width:1439px;height:2px;background:#f00000;"></div>
<div style="left:1436px;top:20px;width:1px;height:598px;background:#f4c8cc;"></div>
<svg style="left:0px;top:0px;" width="1439" height="620" viewBox="0 0 1439 620"><path d="M348,10.6 C346.8,10.2 343.2,9.1 341,8.3 C338.8,7.5 337.1,6.7 334.8,5.8 C332.5,4.9 330.6,3.7 327,3.2 C323.4,2.7 317.5,2.5 313,2.9 C308.5,3.3 304.0,4.3 300,5.5 C296.0,6.7 292.4,8.3 289.1,10 C285.8,11.7 282.6,13.5 280,15.6 C277.4,17.7 275.1,19.6 273.3,22.4 C271.5,25.2 269.6,29.4 269,32.6 C268.4,35.8 268.8,38.8 269.7,41.6 C270.6,44.4 272.5,47.0 274.4,49.5 C276.3,52.0 278.4,54.0 281.2,56.3 C284.0,58.5 287.4,61.1 291.4,63 C295.3,64.9 299.8,66.5 304.9,67.6 C310.0,68.7 316.1,69.2 322,69.8 C327.9,70.4 334.8,71.2 340,71.3 C345.2,71.4 349.3,71.0 353,70.6 C356.7,70.1 359.4,69.4 362,68.6 C364.6,67.8 366.8,67.0 368.5,65.7 C370.2,64.4 370.9,62.9 372,61 C373.1,59.1 374.1,56.5 375,54.2 C375.9,51.9 377.1,49.4 377.5,47 C377.9,44.6 377.7,42.3 377.2,40 C376.7,37.7 376.1,36.2 374.7,33.4 C373.3,30.6 371.2,26.3 369,23 C366.8,19.7 364.1,16.3 361.7,13.8 C359.3,11.3 357.1,9.9 354.8,8.2 C352.5,6.5 349.8,4.5 347.7,3.4 C345.6,2.2 343.5,1.6 342,1.3 C340.5,1.0 339.9,1.1 338.7,1.8 C337.5,2.5 335.4,5.1 334.8,5.8" fill="none" stroke="#e60f1a" stroke-width="2.1" stroke-linecap="round" stroke-linejoin="round"/></svg>
</div></body></html>
